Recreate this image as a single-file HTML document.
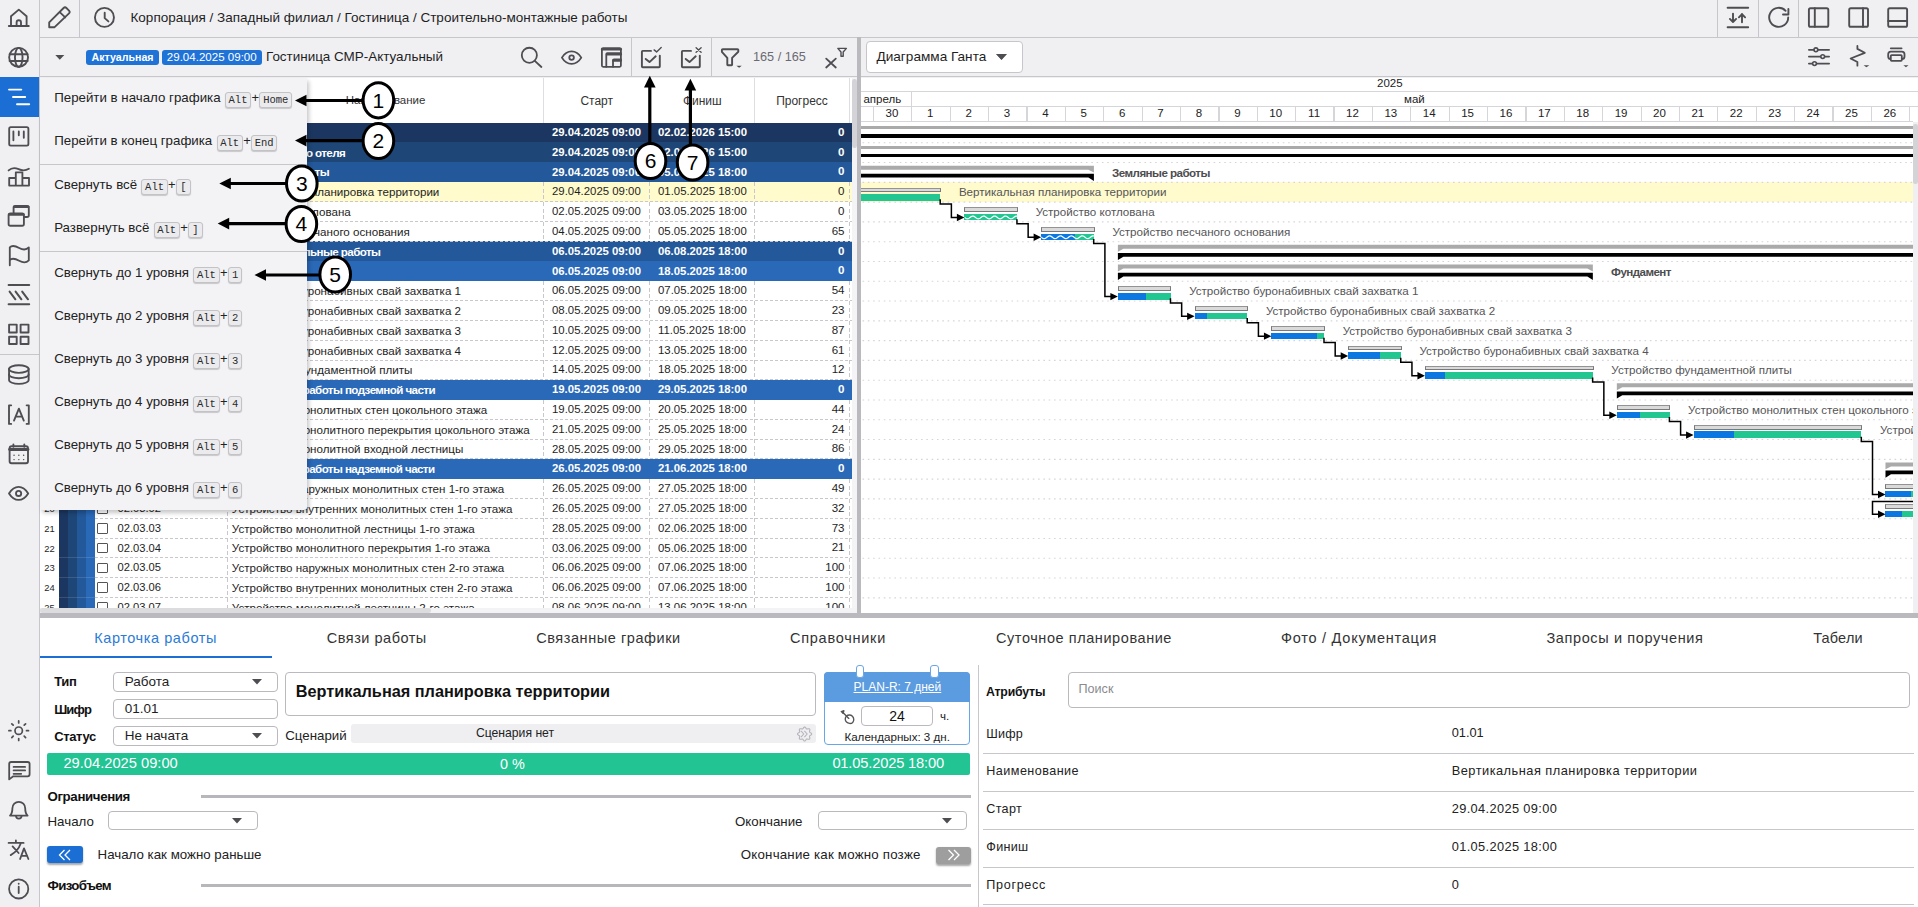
<!DOCTYPE html><html><head><meta charset="utf-8"><style>
html,body{margin:0;padding:0;}
body{width:1918px;height:907px;overflow:hidden;position:relative;background:#f0f0f3;font-family:'Liberation Sans', sans-serif;}
.r{position:absolute;box-sizing:border-box;}
.t{position:absolute;white-space:nowrap;}
.kbd{position:absolute;box-sizing:border-box;background:#ebebee;border:1px solid #c2c2c7;border-radius:3px;box-shadow:0 1px 0 #c8c8cc;font-family:'Liberation Mono', monospace;font-size:10px;color:#333;text-align:center;}
</style></head><body>

<div class="r" style="left:39.00px;top:0.00px;width:1.00px;height:907.00px;background:#c6c6cb;"></div>
<div class="r" style="left:0.00px;top:77.00px;width:39.00px;height:40.00px;background:#1b6fd4;"></div>
<div class="r" style="left:0.00px;top:353.50px;width:39.00px;height:1.00px;background:#c6c6cb;"></div>
<div class="r" style="left:40.00px;top:37.00px;width:1878.00px;height:1.00px;background:#c6c6cb;"></div>
<div class="r" style="left:79.00px;top:0.00px;width:1.00px;height:37.00px;background:#c6c6cb;"></div>
<div class="t" style="left:130.50px;top:10.77px;font-size:13.5px;line-height:13.5px;color:#1e1e1e;">Корпорация / Западный филиал / Гостиница / Строительно-монтажные работы</div>
<div class="r" style="left:1717.00px;top:0.00px;width:1.00px;height:37.00px;background:#c6c6cb;"></div>
<div class="r" style="left:1758.00px;top:0.00px;width:1.00px;height:37.00px;background:#c6c6cb;"></div>
<div class="r" style="left:1798.00px;top:0.00px;width:1.00px;height:37.00px;background:#c6c6cb;"></div>
<div class="r" style="left:40.00px;top:76.00px;width:817.00px;height:1.00px;background:#c6c6cb;"></div>
<div class="r" style="left:861.00px;top:76.00px;width:1057.00px;height:1.00px;background:#c6c6cb;"></div>
<div class="r" style="left:86.00px;top:50.00px;width:73.00px;height:15.00px;background:#1f72d6;border-radius:3px;"></div>
<div class="t" style="left:49.50px;width:73px;text-align:center;top:52.28px;font-size:10.65px;line-height:10.65px;color:#fff;font-weight:700;left:86px;">Актуальная</div>
<div class="r" style="left:162.00px;top:50.00px;width:99.50px;height:15.00px;background:#1f72d6;border-radius:3px;"></div>
<div class="t" style="left:112.25px;width:99.5px;text-align:center;top:51.72px;font-size:11.55px;line-height:11.55px;color:#fff;left:162px;">29.04.2025 09:00</div>
<div class="t" style="left:266.00px;top:50.41px;font-size:13.45px;line-height:13.45px;color:#1e1e1e;">Гостиница СМР-Актуальный</div>
<div class="r" style="left:631.00px;top:38.00px;width:1.00px;height:38.50px;background:#c6c6cb;"></div>
<div class="r" style="left:711.00px;top:38.00px;width:1.00px;height:38.50px;background:#c6c6cb;"></div>
<div class="t" style="left:753.00px;top:51.05px;font-size:12.7px;line-height:12.7px;color:#6a6a70;">165 / 165</div>
<div class="r" style="left:857.00px;top:37.00px;width:4.00px;height:580.00px;background:#b9b9be;"></div>
<div class="r" style="left:40.00px;top:77.50px;width:817.00px;height:45.00px;background:#ffffff;"></div>
<div class="r" style="left:227.00px;top:77.50px;width:1.00px;height:45.00px;background:#dedee2;"></div>
<div class="r" style="left:543.20px;top:77.50px;width:1.00px;height:45.00px;background:#dedee2;"></div>
<div class="r" style="left:649.10px;top:77.50px;width:1.00px;height:45.00px;background:#dedee2;"></div>
<div class="r" style="left:754.20px;top:77.50px;width:1.00px;height:45.00px;background:#dedee2;"></div>
<div class="r" style="left:849.00px;top:77.50px;width:1.00px;height:45.00px;background:#dedee2;"></div>
<div class="t" style="left:305.60px;width:160px;text-align:center;top:95.27px;font-size:11.5px;line-height:11.5px;color:#333;">Наименование</div>
<div class="t" style="left:546.70px;width:100px;text-align:center;top:94.84px;font-size:12px;line-height:12px;color:#333;">Старт</div>
<div class="t" style="left:652.30px;width:100px;text-align:center;top:94.84px;font-size:12px;line-height:12px;color:#333;">Финиш</div>
<div class="t" style="left:752.00px;width:100px;text-align:center;top:94.84px;font-size:12px;line-height:12px;color:#333;">Прогресс</div>
<div class="r" style="left:40px;top:122.7px;width:811.6px;height:485.2px;overflow:hidden;background:#fff;">
<div class="r" style="left:0.00px;top:0.00px;width:811.60px;height:20.09px;background:#1b3761;"></div>
<div class="r" style="left:0.00px;top:19.79px;width:811.60px;height:20.09px;background:#1e4778;"></div>
<div class="r" style="left:0.00px;top:39.57px;width:811.60px;height:20.09px;background:#23589a;"></div>
<div class="r" style="left:0.00px;top:59.36px;width:811.60px;height:20.09px;background:#fffbcc;"></div>
<div class="r" style="left:19.00px;top:59.36px;width:9.00px;height:20.29px;background:#1b3761;"></div>
<div class="r" style="left:28.00px;top:59.36px;width:9.00px;height:20.29px;background:#1e4778;"></div>
<div class="r" style="left:37.00px;top:59.36px;width:9.00px;height:20.29px;background:#23589a;"></div>
<div class="r" style="left:19.00px;top:78.64px;width:27.00px;height:1.00px;background:rgba(255,255,255,0.13);"></div>
<div class="r" style="left:0.00px;top:79.14px;width:811.60px;height:20.09px;background:#fff;"></div>
<div class="r" style="left:19.00px;top:79.14px;width:9.00px;height:20.29px;background:#1b3761;"></div>
<div class="r" style="left:28.00px;top:79.14px;width:9.00px;height:20.29px;background:#1e4778;"></div>
<div class="r" style="left:37.00px;top:79.14px;width:9.00px;height:20.29px;background:#23589a;"></div>
<div class="r" style="left:19.00px;top:98.42px;width:27.00px;height:1.00px;background:rgba(255,255,255,0.13);"></div>
<div class="r" style="left:0.00px;top:98.92px;width:811.60px;height:20.09px;background:#fff;"></div>
<div class="r" style="left:19.00px;top:98.92px;width:9.00px;height:20.29px;background:#1b3761;"></div>
<div class="r" style="left:28.00px;top:98.92px;width:9.00px;height:20.29px;background:#1e4778;"></div>
<div class="r" style="left:37.00px;top:98.92px;width:9.00px;height:20.29px;background:#23589a;"></div>
<div class="r" style="left:19.00px;top:118.21px;width:27.00px;height:1.00px;background:rgba(255,255,255,0.13);"></div>
<div class="r" style="left:0.00px;top:118.71px;width:811.60px;height:20.09px;background:#23589a;"></div>
<div class="r" style="left:0.00px;top:138.50px;width:811.60px;height:20.09px;background:#2a69b8;"></div>
<div class="r" style="left:0.00px;top:158.28px;width:811.60px;height:20.09px;background:#fff;"></div>
<div class="r" style="left:19.00px;top:158.28px;width:9.00px;height:20.29px;background:#1b3761;"></div>
<div class="r" style="left:28.00px;top:158.28px;width:9.00px;height:20.29px;background:#1e4778;"></div>
<div class="r" style="left:37.00px;top:158.28px;width:9.00px;height:20.29px;background:#23589a;"></div>
<div class="r" style="left:46.00px;top:158.28px;width:9.00px;height:20.29px;background:#2a69b8;"></div>
<div class="r" style="left:19.00px;top:177.56px;width:36.00px;height:1.00px;background:rgba(255,255,255,0.13);"></div>
<div class="r" style="left:0.00px;top:178.06px;width:811.60px;height:20.09px;background:#fff;"></div>
<div class="r" style="left:19.00px;top:178.06px;width:9.00px;height:20.29px;background:#1b3761;"></div>
<div class="r" style="left:28.00px;top:178.06px;width:9.00px;height:20.29px;background:#1e4778;"></div>
<div class="r" style="left:37.00px;top:178.06px;width:9.00px;height:20.29px;background:#23589a;"></div>
<div class="r" style="left:46.00px;top:178.06px;width:9.00px;height:20.29px;background:#2a69b8;"></div>
<div class="r" style="left:19.00px;top:197.35px;width:36.00px;height:1.00px;background:rgba(255,255,255,0.13);"></div>
<div class="r" style="left:0.00px;top:197.85px;width:811.60px;height:20.09px;background:#fff;"></div>
<div class="r" style="left:19.00px;top:197.85px;width:9.00px;height:20.29px;background:#1b3761;"></div>
<div class="r" style="left:28.00px;top:197.85px;width:9.00px;height:20.29px;background:#1e4778;"></div>
<div class="r" style="left:37.00px;top:197.85px;width:9.00px;height:20.29px;background:#23589a;"></div>
<div class="r" style="left:46.00px;top:197.85px;width:9.00px;height:20.29px;background:#2a69b8;"></div>
<div class="r" style="left:19.00px;top:217.13px;width:36.00px;height:1.00px;background:rgba(255,255,255,0.13);"></div>
<div class="r" style="left:0.00px;top:217.63px;width:811.60px;height:20.09px;background:#fff;"></div>
<div class="r" style="left:19.00px;top:217.63px;width:9.00px;height:20.29px;background:#1b3761;"></div>
<div class="r" style="left:28.00px;top:217.63px;width:9.00px;height:20.29px;background:#1e4778;"></div>
<div class="r" style="left:37.00px;top:217.63px;width:9.00px;height:20.29px;background:#23589a;"></div>
<div class="r" style="left:46.00px;top:217.63px;width:9.00px;height:20.29px;background:#2a69b8;"></div>
<div class="r" style="left:19.00px;top:236.92px;width:36.00px;height:1.00px;background:rgba(255,255,255,0.13);"></div>
<div class="r" style="left:0.00px;top:237.42px;width:811.60px;height:20.09px;background:#fff;"></div>
<div class="r" style="left:19.00px;top:237.42px;width:9.00px;height:20.29px;background:#1b3761;"></div>
<div class="r" style="left:28.00px;top:237.42px;width:9.00px;height:20.29px;background:#1e4778;"></div>
<div class="r" style="left:37.00px;top:237.42px;width:9.00px;height:20.29px;background:#23589a;"></div>
<div class="r" style="left:46.00px;top:237.42px;width:9.00px;height:20.29px;background:#2a69b8;"></div>
<div class="r" style="left:19.00px;top:256.71px;width:36.00px;height:1.00px;background:rgba(255,255,255,0.13);"></div>
<div class="r" style="left:0.00px;top:257.20px;width:811.60px;height:20.09px;background:#2a69b8;"></div>
<div class="r" style="left:0.00px;top:276.99px;width:811.60px;height:20.09px;background:#fff;"></div>
<div class="r" style="left:19.00px;top:276.99px;width:9.00px;height:20.29px;background:#1b3761;"></div>
<div class="r" style="left:28.00px;top:276.99px;width:9.00px;height:20.29px;background:#1e4778;"></div>
<div class="r" style="left:37.00px;top:276.99px;width:9.00px;height:20.29px;background:#23589a;"></div>
<div class="r" style="left:46.00px;top:276.99px;width:9.00px;height:20.29px;background:#2a69b8;"></div>
<div class="r" style="left:19.00px;top:296.28px;width:36.00px;height:1.00px;background:rgba(255,255,255,0.13);"></div>
<div class="r" style="left:0.00px;top:296.77px;width:811.60px;height:20.09px;background:#fff;"></div>
<div class="r" style="left:19.00px;top:296.77px;width:9.00px;height:20.29px;background:#1b3761;"></div>
<div class="r" style="left:28.00px;top:296.77px;width:9.00px;height:20.29px;background:#1e4778;"></div>
<div class="r" style="left:37.00px;top:296.77px;width:9.00px;height:20.29px;background:#23589a;"></div>
<div class="r" style="left:46.00px;top:296.77px;width:9.00px;height:20.29px;background:#2a69b8;"></div>
<div class="r" style="left:19.00px;top:316.06px;width:36.00px;height:1.00px;background:rgba(255,255,255,0.13);"></div>
<div class="r" style="left:0.00px;top:316.56px;width:811.60px;height:20.09px;background:#fff;"></div>
<div class="r" style="left:19.00px;top:316.56px;width:9.00px;height:20.29px;background:#1b3761;"></div>
<div class="r" style="left:28.00px;top:316.56px;width:9.00px;height:20.29px;background:#1e4778;"></div>
<div class="r" style="left:37.00px;top:316.56px;width:9.00px;height:20.29px;background:#23589a;"></div>
<div class="r" style="left:46.00px;top:316.56px;width:9.00px;height:20.29px;background:#2a69b8;"></div>
<div class="r" style="left:19.00px;top:335.85px;width:36.00px;height:1.00px;background:rgba(255,255,255,0.13);"></div>
<div class="r" style="left:0.00px;top:336.35px;width:811.60px;height:20.09px;background:#2a69b8;"></div>
<div class="r" style="left:0.00px;top:356.13px;width:811.60px;height:20.09px;background:#fff;"></div>
<div class="r" style="left:19.00px;top:356.13px;width:9.00px;height:20.29px;background:#1b3761;"></div>
<div class="r" style="left:28.00px;top:356.13px;width:9.00px;height:20.29px;background:#1e4778;"></div>
<div class="r" style="left:37.00px;top:356.13px;width:9.00px;height:20.29px;background:#23589a;"></div>
<div class="r" style="left:46.00px;top:356.13px;width:9.00px;height:20.29px;background:#2a69b8;"></div>
<div class="r" style="left:19.00px;top:375.42px;width:36.00px;height:1.00px;background:rgba(255,255,255,0.13);"></div>
<div class="r" style="left:0.00px;top:375.92px;width:811.60px;height:20.09px;background:#fff;"></div>
<div class="r" style="left:19.00px;top:375.92px;width:9.00px;height:20.29px;background:#1b3761;"></div>
<div class="r" style="left:28.00px;top:375.92px;width:9.00px;height:20.29px;background:#1e4778;"></div>
<div class="r" style="left:37.00px;top:375.92px;width:9.00px;height:20.29px;background:#23589a;"></div>
<div class="r" style="left:46.00px;top:375.92px;width:9.00px;height:20.29px;background:#2a69b8;"></div>
<div class="r" style="left:19.00px;top:395.20px;width:36.00px;height:1.00px;background:rgba(255,255,255,0.13);"></div>
<div class="r" style="left:0.00px;top:395.70px;width:811.60px;height:20.09px;background:#fff;"></div>
<div class="r" style="left:19.00px;top:395.70px;width:9.00px;height:20.29px;background:#1b3761;"></div>
<div class="r" style="left:28.00px;top:395.70px;width:9.00px;height:20.29px;background:#1e4778;"></div>
<div class="r" style="left:37.00px;top:395.70px;width:9.00px;height:20.29px;background:#23589a;"></div>
<div class="r" style="left:46.00px;top:395.70px;width:9.00px;height:20.29px;background:#2a69b8;"></div>
<div class="r" style="left:19.00px;top:414.99px;width:36.00px;height:1.00px;background:rgba(255,255,255,0.13);"></div>
<div class="r" style="left:0.00px;top:415.49px;width:811.60px;height:20.09px;background:#fff;"></div>
<div class="r" style="left:19.00px;top:415.49px;width:9.00px;height:20.29px;background:#1b3761;"></div>
<div class="r" style="left:28.00px;top:415.49px;width:9.00px;height:20.29px;background:#1e4778;"></div>
<div class="r" style="left:37.00px;top:415.49px;width:9.00px;height:20.29px;background:#23589a;"></div>
<div class="r" style="left:46.00px;top:415.49px;width:9.00px;height:20.29px;background:#2a69b8;"></div>
<div class="r" style="left:19.00px;top:434.77px;width:36.00px;height:1.00px;background:rgba(255,255,255,0.13);"></div>
<div class="r" style="left:0.00px;top:435.27px;width:811.60px;height:20.09px;background:#fff;"></div>
<div class="r" style="left:19.00px;top:435.27px;width:9.00px;height:20.29px;background:#1b3761;"></div>
<div class="r" style="left:28.00px;top:435.27px;width:9.00px;height:20.29px;background:#1e4778;"></div>
<div class="r" style="left:37.00px;top:435.27px;width:9.00px;height:20.29px;background:#23589a;"></div>
<div class="r" style="left:46.00px;top:435.27px;width:9.00px;height:20.29px;background:#2a69b8;"></div>
<div class="r" style="left:19.00px;top:454.56px;width:36.00px;height:1.00px;background:rgba(255,255,255,0.13);"></div>
<div class="r" style="left:0.00px;top:455.06px;width:811.60px;height:20.09px;background:#fff;"></div>
<div class="r" style="left:19.00px;top:455.06px;width:9.00px;height:20.29px;background:#1b3761;"></div>
<div class="r" style="left:28.00px;top:455.06px;width:9.00px;height:20.29px;background:#1e4778;"></div>
<div class="r" style="left:37.00px;top:455.06px;width:9.00px;height:20.29px;background:#23589a;"></div>
<div class="r" style="left:46.00px;top:455.06px;width:9.00px;height:20.29px;background:#2a69b8;"></div>
<div class="r" style="left:19.00px;top:474.34px;width:36.00px;height:1.00px;background:rgba(255,255,255,0.13);"></div>
<div class="r" style="left:0.00px;top:474.84px;width:811.60px;height:20.09px;background:#fff;"></div>
<div class="r" style="left:19.00px;top:474.84px;width:9.00px;height:20.29px;background:#1b3761;"></div>
<div class="r" style="left:28.00px;top:474.84px;width:9.00px;height:20.29px;background:#1e4778;"></div>
<div class="r" style="left:37.00px;top:474.84px;width:9.00px;height:20.29px;background:#23589a;"></div>
<div class="r" style="left:46.00px;top:474.84px;width:9.00px;height:20.29px;background:#2a69b8;"></div>
<div class="r" style="left:19.00px;top:494.13px;width:36.00px;height:1.00px;background:rgba(255,255,255,0.13);"></div>
<div class="t" style="left:4.20px;top:5.44px;font-size:9.4px;line-height:9.4px;color:#fff;">1</div>
<div class="t" style="left:77.50px;top:4.52px;font-size:11.2px;line-height:11.2px;color:#fff;font-weight:700;">01</div>
<div class="t" style="left:191.80px;top:4.18px;font-size:11.6px;line-height:11.6px;color:#fff;font-weight:700;letter-spacing:-0.58px;">Гостиница</div>
<div class="t" style="left:512.00px;top:4.39px;font-size:11.35px;line-height:11.35px;color:#fff;font-weight:700;">29.04.2025 09:00</div>
<div class="t" style="left:618.00px;top:4.39px;font-size:11.35px;line-height:11.35px;color:#fff;font-weight:700;">02.02.2026 15:00</div>
<div class="t" style="left:744.50px;width:60px;text-align:right;top:4.22px;font-size:11.55px;line-height:11.55px;color:#fff;font-weight:700;">0</div>
<div class="t" style="left:4.20px;top:25.23px;font-size:9.4px;line-height:9.4px;color:#fff;">2</div>
<div class="t" style="left:77.50px;top:24.30px;font-size:11.2px;line-height:11.2px;color:#fff;font-weight:700;">01</div>
<div class="t" style="left:191.80px;top:23.97px;font-size:11.6px;line-height:11.6px;color:#fff;font-weight:700;letter-spacing:-0.58px;">Строительство отеля</div>
<div class="t" style="left:512.00px;top:24.18px;font-size:11.35px;line-height:11.35px;color:#fff;font-weight:700;">29.04.2025 09:00</div>
<div class="t" style="left:618.00px;top:24.18px;font-size:11.35px;line-height:11.35px;color:#fff;font-weight:700;">02.02.2026 15:00</div>
<div class="t" style="left:744.50px;width:60px;text-align:right;top:24.01px;font-size:11.55px;line-height:11.55px;color:#fff;font-weight:700;">0</div>
<div class="t" style="left:4.20px;top:45.01px;font-size:9.4px;line-height:9.4px;color:#fff;">3</div>
<div class="t" style="left:77.50px;top:44.09px;font-size:11.2px;line-height:11.2px;color:#fff;font-weight:700;">01</div>
<div class="t" style="left:191.80px;top:43.75px;font-size:11.6px;line-height:11.6px;color:#fff;font-weight:700;letter-spacing:-0.58px;">Земляные работы</div>
<div class="t" style="left:512.00px;top:43.96px;font-size:11.35px;line-height:11.35px;color:#fff;font-weight:700;">29.04.2025 09:00</div>
<div class="t" style="left:618.00px;top:43.96px;font-size:11.35px;line-height:11.35px;color:#fff;font-weight:700;">05.05.2025 18:00</div>
<div class="t" style="left:744.50px;width:60px;text-align:right;top:43.79px;font-size:11.55px;line-height:11.55px;color:#fff;font-weight:700;">0</div>
<div class="r" style="left:55.00px;top:78.54px;width:760.00px;height:1.00px;background:repeating-linear-gradient(90deg,#c8c8cc 0,#c8c8cc 3px,transparent 3px,transparent 5px);"></div>
<div class="r" style="left:187.00px;top:59.36px;width:1.00px;height:19.79px;background:repeating-linear-gradient(180deg,#c8c8cc 0,#c8c8cc 4px,transparent 4px,transparent 6.6px);"></div>
<div class="r" style="left:503.20px;top:59.36px;width:1.00px;height:19.79px;background:repeating-linear-gradient(180deg,#c8c8cc 0,#c8c8cc 4px,transparent 4px,transparent 6.6px);"></div>
<div class="r" style="left:609.10px;top:59.36px;width:1.00px;height:19.79px;background:repeating-linear-gradient(180deg,#c8c8cc 0,#c8c8cc 4px,transparent 4px,transparent 6.6px);"></div>
<div class="r" style="left:714.20px;top:59.36px;width:1.00px;height:19.79px;background:repeating-linear-gradient(180deg,#c8c8cc 0,#c8c8cc 4px,transparent 4px,transparent 6.6px);"></div>
<div class="r" style="left:808.70px;top:59.36px;width:1.00px;height:19.79px;background:repeating-linear-gradient(180deg,#c8c8cc 0,#c8c8cc 4px,transparent 4px,transparent 6.6px);"></div>
<div class="r" style="left:57.00px;top:63.96px;width:11.20px;height:10.60px;background:#fff;border:1px solid #555;border-radius:1px;"></div>
<div class="t" style="left:4.20px;top:64.80px;font-size:9.4px;line-height:9.4px;color:#1e1e1e;">4</div>
<div class="t" style="left:77.50px;top:63.87px;font-size:11.2px;line-height:11.2px;color:#1e1e1e;">01.01</div>
<div class="t" style="left:191.80px;top:63.54px;font-size:11.6px;line-height:11.6px;color:#1e1e1e;">Вертикальная планировка территории</div>
<div class="t" style="left:512.00px;top:63.69px;font-size:11.42px;line-height:11.42px;color:#1e1e1e;">29.04.2025 09:00</div>
<div class="t" style="left:618.00px;top:63.69px;font-size:11.42px;line-height:11.42px;color:#1e1e1e;">01.05.2025 18:00</div>
<div class="t" style="left:744.50px;width:60px;text-align:right;top:63.58px;font-size:11.55px;line-height:11.55px;color:#1e1e1e;">0</div>
<div class="r" style="left:55.00px;top:98.33px;width:760.00px;height:1.00px;background:repeating-linear-gradient(90deg,#c8c8cc 0,#c8c8cc 3px,transparent 3px,transparent 5px);"></div>
<div class="r" style="left:187.00px;top:79.14px;width:1.00px;height:19.79px;background:repeating-linear-gradient(180deg,#c8c8cc 0,#c8c8cc 4px,transparent 4px,transparent 6.6px);"></div>
<div class="r" style="left:503.20px;top:79.14px;width:1.00px;height:19.79px;background:repeating-linear-gradient(180deg,#c8c8cc 0,#c8c8cc 4px,transparent 4px,transparent 6.6px);"></div>
<div class="r" style="left:609.10px;top:79.14px;width:1.00px;height:19.79px;background:repeating-linear-gradient(180deg,#c8c8cc 0,#c8c8cc 4px,transparent 4px,transparent 6.6px);"></div>
<div class="r" style="left:714.20px;top:79.14px;width:1.00px;height:19.79px;background:repeating-linear-gradient(180deg,#c8c8cc 0,#c8c8cc 4px,transparent 4px,transparent 6.6px);"></div>
<div class="r" style="left:808.70px;top:79.14px;width:1.00px;height:19.79px;background:repeating-linear-gradient(180deg,#c8c8cc 0,#c8c8cc 4px,transparent 4px,transparent 6.6px);"></div>
<div class="r" style="left:57.00px;top:83.74px;width:11.20px;height:10.60px;background:#fff;border:1px solid #555;border-radius:1px;"></div>
<div class="t" style="left:4.20px;top:84.58px;font-size:9.4px;line-height:9.4px;color:#1e1e1e;">5</div>
<div class="t" style="left:77.50px;top:83.66px;font-size:11.2px;line-height:11.2px;color:#1e1e1e;">01.02</div>
<div class="t" style="left:191.80px;top:83.32px;font-size:11.6px;line-height:11.6px;color:#1e1e1e;">Устройство котлована</div>
<div class="t" style="left:512.00px;top:83.47px;font-size:11.42px;line-height:11.42px;color:#1e1e1e;">02.05.2025 09:00</div>
<div class="t" style="left:618.00px;top:83.47px;font-size:11.42px;line-height:11.42px;color:#1e1e1e;">03.05.2025 18:00</div>
<div class="t" style="left:744.50px;width:60px;text-align:right;top:83.36px;font-size:11.55px;line-height:11.55px;color:#1e1e1e;">0</div>
<div class="r" style="left:55.00px;top:118.11px;width:760.00px;height:1.00px;background:repeating-linear-gradient(90deg,#c8c8cc 0,#c8c8cc 3px,transparent 3px,transparent 5px);"></div>
<div class="r" style="left:187.00px;top:98.92px;width:1.00px;height:19.79px;background:repeating-linear-gradient(180deg,#c8c8cc 0,#c8c8cc 4px,transparent 4px,transparent 6.6px);"></div>
<div class="r" style="left:503.20px;top:98.92px;width:1.00px;height:19.79px;background:repeating-linear-gradient(180deg,#c8c8cc 0,#c8c8cc 4px,transparent 4px,transparent 6.6px);"></div>
<div class="r" style="left:609.10px;top:98.92px;width:1.00px;height:19.79px;background:repeating-linear-gradient(180deg,#c8c8cc 0,#c8c8cc 4px,transparent 4px,transparent 6.6px);"></div>
<div class="r" style="left:714.20px;top:98.92px;width:1.00px;height:19.79px;background:repeating-linear-gradient(180deg,#c8c8cc 0,#c8c8cc 4px,transparent 4px,transparent 6.6px);"></div>
<div class="r" style="left:808.70px;top:98.92px;width:1.00px;height:19.79px;background:repeating-linear-gradient(180deg,#c8c8cc 0,#c8c8cc 4px,transparent 4px,transparent 6.6px);"></div>
<div class="r" style="left:57.00px;top:103.52px;width:11.20px;height:10.60px;background:#fff;border:1px solid #555;border-radius:1px;"></div>
<div class="t" style="left:4.20px;top:104.37px;font-size:9.4px;line-height:9.4px;color:#1e1e1e;">6</div>
<div class="t" style="left:77.50px;top:103.44px;font-size:11.2px;line-height:11.2px;color:#1e1e1e;">01.03</div>
<div class="t" style="left:191.80px;top:103.11px;font-size:11.6px;line-height:11.6px;color:#1e1e1e;">Устройство песчаного основания</div>
<div class="t" style="left:512.00px;top:103.26px;font-size:11.42px;line-height:11.42px;color:#1e1e1e;">04.05.2025 09:00</div>
<div class="t" style="left:618.00px;top:103.26px;font-size:11.42px;line-height:11.42px;color:#1e1e1e;">05.05.2025 18:00</div>
<div class="t" style="left:744.50px;width:60px;text-align:right;top:103.15px;font-size:11.55px;line-height:11.55px;color:#1e1e1e;">65</div>
<div class="t" style="left:4.20px;top:124.15px;font-size:9.4px;line-height:9.4px;color:#fff;">7</div>
<div class="t" style="left:77.50px;top:123.23px;font-size:11.2px;line-height:11.2px;color:#fff;font-weight:700;">02</div>
<div class="t" style="left:191.80px;top:122.89px;font-size:11.6px;line-height:11.6px;color:#fff;font-weight:700;letter-spacing:-0.58px;">Общестроительные работы</div>
<div class="t" style="left:512.00px;top:123.10px;font-size:11.35px;line-height:11.35px;color:#fff;font-weight:700;">06.05.2025 09:00</div>
<div class="t" style="left:618.00px;top:123.10px;font-size:11.35px;line-height:11.35px;color:#fff;font-weight:700;">06.08.2025 18:00</div>
<div class="t" style="left:744.50px;width:60px;text-align:right;top:122.93px;font-size:11.55px;line-height:11.55px;color:#fff;font-weight:700;">0</div>
<div class="t" style="left:4.20px;top:143.94px;font-size:9.4px;line-height:9.4px;color:#fff;">8</div>
<div class="t" style="left:77.50px;top:143.01px;font-size:11.2px;line-height:11.2px;color:#fff;font-weight:700;">02.01</div>
<div class="t" style="left:191.80px;top:142.68px;font-size:11.6px;line-height:11.6px;color:#fff;font-weight:700;letter-spacing:-0.58px;">Фундамент</div>
<div class="t" style="left:512.00px;top:142.89px;font-size:11.35px;line-height:11.35px;color:#fff;font-weight:700;">06.05.2025 09:00</div>
<div class="t" style="left:618.00px;top:142.89px;font-size:11.35px;line-height:11.35px;color:#fff;font-weight:700;">18.05.2025 18:00</div>
<div class="t" style="left:744.50px;width:60px;text-align:right;top:142.72px;font-size:11.55px;line-height:11.55px;color:#fff;font-weight:700;">0</div>
<div class="r" style="left:55.00px;top:177.47px;width:760.00px;height:1.00px;background:repeating-linear-gradient(90deg,#c8c8cc 0,#c8c8cc 3px,transparent 3px,transparent 5px);"></div>
<div class="r" style="left:187.00px;top:158.28px;width:1.00px;height:19.79px;background:repeating-linear-gradient(180deg,#c8c8cc 0,#c8c8cc 4px,transparent 4px,transparent 6.6px);"></div>
<div class="r" style="left:503.20px;top:158.28px;width:1.00px;height:19.79px;background:repeating-linear-gradient(180deg,#c8c8cc 0,#c8c8cc 4px,transparent 4px,transparent 6.6px);"></div>
<div class="r" style="left:609.10px;top:158.28px;width:1.00px;height:19.79px;background:repeating-linear-gradient(180deg,#c8c8cc 0,#c8c8cc 4px,transparent 4px,transparent 6.6px);"></div>
<div class="r" style="left:714.20px;top:158.28px;width:1.00px;height:19.79px;background:repeating-linear-gradient(180deg,#c8c8cc 0,#c8c8cc 4px,transparent 4px,transparent 6.6px);"></div>
<div class="r" style="left:808.70px;top:158.28px;width:1.00px;height:19.79px;background:repeating-linear-gradient(180deg,#c8c8cc 0,#c8c8cc 4px,transparent 4px,transparent 6.6px);"></div>
<div class="r" style="left:57.00px;top:162.88px;width:11.20px;height:10.60px;background:#fff;border:1px solid #555;border-radius:1px;"></div>
<div class="t" style="left:4.20px;top:163.72px;font-size:9.4px;line-height:9.4px;color:#1e1e1e;">9</div>
<div class="t" style="left:77.50px;top:162.80px;font-size:11.2px;line-height:11.2px;color:#1e1e1e;">02.01.01</div>
<div class="t" style="left:191.80px;top:162.46px;font-size:11.6px;line-height:11.6px;color:#1e1e1e;">Устройство буронабивных свай захватка 1</div>
<div class="t" style="left:512.00px;top:162.61px;font-size:11.42px;line-height:11.42px;color:#1e1e1e;">06.05.2025 09:00</div>
<div class="t" style="left:618.00px;top:162.61px;font-size:11.42px;line-height:11.42px;color:#1e1e1e;">07.05.2025 18:00</div>
<div class="t" style="left:744.50px;width:60px;text-align:right;top:162.50px;font-size:11.55px;line-height:11.55px;color:#1e1e1e;">54</div>
<div class="r" style="left:55.00px;top:197.25px;width:760.00px;height:1.00px;background:repeating-linear-gradient(90deg,#c8c8cc 0,#c8c8cc 3px,transparent 3px,transparent 5px);"></div>
<div class="r" style="left:187.00px;top:178.06px;width:1.00px;height:19.79px;background:repeating-linear-gradient(180deg,#c8c8cc 0,#c8c8cc 4px,transparent 4px,transparent 6.6px);"></div>
<div class="r" style="left:503.20px;top:178.06px;width:1.00px;height:19.79px;background:repeating-linear-gradient(180deg,#c8c8cc 0,#c8c8cc 4px,transparent 4px,transparent 6.6px);"></div>
<div class="r" style="left:609.10px;top:178.06px;width:1.00px;height:19.79px;background:repeating-linear-gradient(180deg,#c8c8cc 0,#c8c8cc 4px,transparent 4px,transparent 6.6px);"></div>
<div class="r" style="left:714.20px;top:178.06px;width:1.00px;height:19.79px;background:repeating-linear-gradient(180deg,#c8c8cc 0,#c8c8cc 4px,transparent 4px,transparent 6.6px);"></div>
<div class="r" style="left:808.70px;top:178.06px;width:1.00px;height:19.79px;background:repeating-linear-gradient(180deg,#c8c8cc 0,#c8c8cc 4px,transparent 4px,transparent 6.6px);"></div>
<div class="r" style="left:57.00px;top:182.66px;width:11.20px;height:10.60px;background:#fff;border:1px solid #555;border-radius:1px;"></div>
<div class="t" style="left:4.20px;top:183.51px;font-size:9.4px;line-height:9.4px;color:#1e1e1e;">10</div>
<div class="t" style="left:77.50px;top:182.58px;font-size:11.2px;line-height:11.2px;color:#1e1e1e;">02.01.02</div>
<div class="t" style="left:191.80px;top:182.25px;font-size:11.6px;line-height:11.6px;color:#1e1e1e;">Устройство буронабивных свай захватка 2</div>
<div class="t" style="left:512.00px;top:182.40px;font-size:11.42px;line-height:11.42px;color:#1e1e1e;">08.05.2025 09:00</div>
<div class="t" style="left:618.00px;top:182.40px;font-size:11.42px;line-height:11.42px;color:#1e1e1e;">09.05.2025 18:00</div>
<div class="t" style="left:744.50px;width:60px;text-align:right;top:182.29px;font-size:11.55px;line-height:11.55px;color:#1e1e1e;">23</div>
<div class="r" style="left:55.00px;top:217.03px;width:760.00px;height:1.00px;background:repeating-linear-gradient(90deg,#c8c8cc 0,#c8c8cc 3px,transparent 3px,transparent 5px);"></div>
<div class="r" style="left:187.00px;top:197.85px;width:1.00px;height:19.79px;background:repeating-linear-gradient(180deg,#c8c8cc 0,#c8c8cc 4px,transparent 4px,transparent 6.6px);"></div>
<div class="r" style="left:503.20px;top:197.85px;width:1.00px;height:19.79px;background:repeating-linear-gradient(180deg,#c8c8cc 0,#c8c8cc 4px,transparent 4px,transparent 6.6px);"></div>
<div class="r" style="left:609.10px;top:197.85px;width:1.00px;height:19.79px;background:repeating-linear-gradient(180deg,#c8c8cc 0,#c8c8cc 4px,transparent 4px,transparent 6.6px);"></div>
<div class="r" style="left:714.20px;top:197.85px;width:1.00px;height:19.79px;background:repeating-linear-gradient(180deg,#c8c8cc 0,#c8c8cc 4px,transparent 4px,transparent 6.6px);"></div>
<div class="r" style="left:808.70px;top:197.85px;width:1.00px;height:19.79px;background:repeating-linear-gradient(180deg,#c8c8cc 0,#c8c8cc 4px,transparent 4px,transparent 6.6px);"></div>
<div class="r" style="left:57.00px;top:202.45px;width:11.20px;height:10.60px;background:#fff;border:1px solid #555;border-radius:1px;"></div>
<div class="t" style="left:4.20px;top:203.29px;font-size:9.4px;line-height:9.4px;color:#1e1e1e;">11</div>
<div class="t" style="left:77.50px;top:202.37px;font-size:11.2px;line-height:11.2px;color:#1e1e1e;">02.01.03</div>
<div class="t" style="left:191.80px;top:202.03px;font-size:11.6px;line-height:11.6px;color:#1e1e1e;">Устройство буронабивных свай захватка 3</div>
<div class="t" style="left:512.00px;top:202.18px;font-size:11.42px;line-height:11.42px;color:#1e1e1e;">10.05.2025 09:00</div>
<div class="t" style="left:618.00px;top:202.18px;font-size:11.42px;line-height:11.42px;color:#1e1e1e;">11.05.2025 18:00</div>
<div class="t" style="left:744.50px;width:60px;text-align:right;top:202.07px;font-size:11.55px;line-height:11.55px;color:#1e1e1e;">87</div>
<div class="r" style="left:55.00px;top:236.82px;width:760.00px;height:1.00px;background:repeating-linear-gradient(90deg,#c8c8cc 0,#c8c8cc 3px,transparent 3px,transparent 5px);"></div>
<div class="r" style="left:187.00px;top:217.63px;width:1.00px;height:19.79px;background:repeating-linear-gradient(180deg,#c8c8cc 0,#c8c8cc 4px,transparent 4px,transparent 6.6px);"></div>
<div class="r" style="left:503.20px;top:217.63px;width:1.00px;height:19.79px;background:repeating-linear-gradient(180deg,#c8c8cc 0,#c8c8cc 4px,transparent 4px,transparent 6.6px);"></div>
<div class="r" style="left:609.10px;top:217.63px;width:1.00px;height:19.79px;background:repeating-linear-gradient(180deg,#c8c8cc 0,#c8c8cc 4px,transparent 4px,transparent 6.6px);"></div>
<div class="r" style="left:714.20px;top:217.63px;width:1.00px;height:19.79px;background:repeating-linear-gradient(180deg,#c8c8cc 0,#c8c8cc 4px,transparent 4px,transparent 6.6px);"></div>
<div class="r" style="left:808.70px;top:217.63px;width:1.00px;height:19.79px;background:repeating-linear-gradient(180deg,#c8c8cc 0,#c8c8cc 4px,transparent 4px,transparent 6.6px);"></div>
<div class="r" style="left:57.00px;top:222.23px;width:11.20px;height:10.60px;background:#fff;border:1px solid #555;border-radius:1px;"></div>
<div class="t" style="left:4.20px;top:223.08px;font-size:9.4px;line-height:9.4px;color:#1e1e1e;">12</div>
<div class="t" style="left:77.50px;top:222.15px;font-size:11.2px;line-height:11.2px;color:#1e1e1e;">02.01.04</div>
<div class="t" style="left:191.80px;top:221.82px;font-size:11.6px;line-height:11.6px;color:#1e1e1e;">Устройство буронабивных свай захватка 4</div>
<div class="t" style="left:512.00px;top:221.97px;font-size:11.42px;line-height:11.42px;color:#1e1e1e;">12.05.2025 09:00</div>
<div class="t" style="left:618.00px;top:221.97px;font-size:11.42px;line-height:11.42px;color:#1e1e1e;">13.05.2025 18:00</div>
<div class="t" style="left:744.50px;width:60px;text-align:right;top:221.86px;font-size:11.55px;line-height:11.55px;color:#1e1e1e;">61</div>
<div class="r" style="left:55.00px;top:256.61px;width:760.00px;height:1.00px;background:repeating-linear-gradient(90deg,#c8c8cc 0,#c8c8cc 3px,transparent 3px,transparent 5px);"></div>
<div class="r" style="left:187.00px;top:237.42px;width:1.00px;height:19.79px;background:repeating-linear-gradient(180deg,#c8c8cc 0,#c8c8cc 4px,transparent 4px,transparent 6.6px);"></div>
<div class="r" style="left:503.20px;top:237.42px;width:1.00px;height:19.79px;background:repeating-linear-gradient(180deg,#c8c8cc 0,#c8c8cc 4px,transparent 4px,transparent 6.6px);"></div>
<div class="r" style="left:609.10px;top:237.42px;width:1.00px;height:19.79px;background:repeating-linear-gradient(180deg,#c8c8cc 0,#c8c8cc 4px,transparent 4px,transparent 6.6px);"></div>
<div class="r" style="left:714.20px;top:237.42px;width:1.00px;height:19.79px;background:repeating-linear-gradient(180deg,#c8c8cc 0,#c8c8cc 4px,transparent 4px,transparent 6.6px);"></div>
<div class="r" style="left:808.70px;top:237.42px;width:1.00px;height:19.79px;background:repeating-linear-gradient(180deg,#c8c8cc 0,#c8c8cc 4px,transparent 4px,transparent 6.6px);"></div>
<div class="r" style="left:57.00px;top:242.02px;width:11.20px;height:10.60px;background:#fff;border:1px solid #555;border-radius:1px;"></div>
<div class="t" style="left:4.20px;top:242.86px;font-size:9.4px;line-height:9.4px;color:#1e1e1e;">13</div>
<div class="t" style="left:77.50px;top:241.94px;font-size:11.2px;line-height:11.2px;color:#1e1e1e;">02.01.05</div>
<div class="t" style="left:191.80px;top:241.60px;font-size:11.6px;line-height:11.6px;color:#1e1e1e;">Устройство фундаментной плиты</div>
<div class="t" style="left:512.00px;top:241.75px;font-size:11.42px;line-height:11.42px;color:#1e1e1e;">14.05.2025 09:00</div>
<div class="t" style="left:618.00px;top:241.75px;font-size:11.42px;line-height:11.42px;color:#1e1e1e;">18.05.2025 18:00</div>
<div class="t" style="left:744.50px;width:60px;text-align:right;top:241.64px;font-size:11.55px;line-height:11.55px;color:#1e1e1e;">12</div>
<div class="t" style="left:4.20px;top:262.65px;font-size:9.4px;line-height:9.4px;color:#fff;">14</div>
<div class="t" style="left:77.50px;top:261.72px;font-size:11.2px;line-height:11.2px;color:#fff;font-weight:700;">02.02</div>
<div class="t" style="left:191.80px;top:261.39px;font-size:11.6px;line-height:11.6px;color:#fff;font-weight:700;letter-spacing:-0.58px;">Монолитные работы подземной части</div>
<div class="t" style="left:512.00px;top:261.60px;font-size:11.35px;line-height:11.35px;color:#fff;font-weight:700;">19.05.2025 09:00</div>
<div class="t" style="left:618.00px;top:261.60px;font-size:11.35px;line-height:11.35px;color:#fff;font-weight:700;">29.05.2025 18:00</div>
<div class="t" style="left:744.50px;width:60px;text-align:right;top:261.43px;font-size:11.55px;line-height:11.55px;color:#fff;font-weight:700;">0</div>
<div class="r" style="left:55.00px;top:296.18px;width:760.00px;height:1.00px;background:repeating-linear-gradient(90deg,#c8c8cc 0,#c8c8cc 3px,transparent 3px,transparent 5px);"></div>
<div class="r" style="left:187.00px;top:276.99px;width:1.00px;height:19.79px;background:repeating-linear-gradient(180deg,#c8c8cc 0,#c8c8cc 4px,transparent 4px,transparent 6.6px);"></div>
<div class="r" style="left:503.20px;top:276.99px;width:1.00px;height:19.79px;background:repeating-linear-gradient(180deg,#c8c8cc 0,#c8c8cc 4px,transparent 4px,transparent 6.6px);"></div>
<div class="r" style="left:609.10px;top:276.99px;width:1.00px;height:19.79px;background:repeating-linear-gradient(180deg,#c8c8cc 0,#c8c8cc 4px,transparent 4px,transparent 6.6px);"></div>
<div class="r" style="left:714.20px;top:276.99px;width:1.00px;height:19.79px;background:repeating-linear-gradient(180deg,#c8c8cc 0,#c8c8cc 4px,transparent 4px,transparent 6.6px);"></div>
<div class="r" style="left:808.70px;top:276.99px;width:1.00px;height:19.79px;background:repeating-linear-gradient(180deg,#c8c8cc 0,#c8c8cc 4px,transparent 4px,transparent 6.6px);"></div>
<div class="r" style="left:57.00px;top:281.59px;width:11.20px;height:10.60px;background:#fff;border:1px solid #555;border-radius:1px;"></div>
<div class="t" style="left:4.20px;top:282.43px;font-size:9.4px;line-height:9.4px;color:#1e1e1e;">15</div>
<div class="t" style="left:77.50px;top:281.51px;font-size:11.2px;line-height:11.2px;color:#1e1e1e;">02.02.01</div>
<div class="t" style="left:191.80px;top:281.17px;font-size:11.6px;line-height:11.6px;color:#1e1e1e;">Устройство монолитных стен цокольного этажа</div>
<div class="t" style="left:512.00px;top:281.32px;font-size:11.42px;line-height:11.42px;color:#1e1e1e;">19.05.2025 09:00</div>
<div class="t" style="left:618.00px;top:281.32px;font-size:11.42px;line-height:11.42px;color:#1e1e1e;">20.05.2025 18:00</div>
<div class="t" style="left:744.50px;width:60px;text-align:right;top:281.21px;font-size:11.55px;line-height:11.55px;color:#1e1e1e;">44</div>
<div class="r" style="left:55.00px;top:315.96px;width:760.00px;height:1.00px;background:repeating-linear-gradient(90deg,#c8c8cc 0,#c8c8cc 3px,transparent 3px,transparent 5px);"></div>
<div class="r" style="left:187.00px;top:296.77px;width:1.00px;height:19.79px;background:repeating-linear-gradient(180deg,#c8c8cc 0,#c8c8cc 4px,transparent 4px,transparent 6.6px);"></div>
<div class="r" style="left:503.20px;top:296.77px;width:1.00px;height:19.79px;background:repeating-linear-gradient(180deg,#c8c8cc 0,#c8c8cc 4px,transparent 4px,transparent 6.6px);"></div>
<div class="r" style="left:609.10px;top:296.77px;width:1.00px;height:19.79px;background:repeating-linear-gradient(180deg,#c8c8cc 0,#c8c8cc 4px,transparent 4px,transparent 6.6px);"></div>
<div class="r" style="left:714.20px;top:296.77px;width:1.00px;height:19.79px;background:repeating-linear-gradient(180deg,#c8c8cc 0,#c8c8cc 4px,transparent 4px,transparent 6.6px);"></div>
<div class="r" style="left:808.70px;top:296.77px;width:1.00px;height:19.79px;background:repeating-linear-gradient(180deg,#c8c8cc 0,#c8c8cc 4px,transparent 4px,transparent 6.6px);"></div>
<div class="r" style="left:57.00px;top:301.38px;width:11.20px;height:10.60px;background:#fff;border:1px solid #555;border-radius:1px;"></div>
<div class="t" style="left:4.20px;top:302.22px;font-size:9.4px;line-height:9.4px;color:#1e1e1e;">16</div>
<div class="t" style="left:77.50px;top:301.29px;font-size:11.2px;line-height:11.2px;color:#1e1e1e;">02.02.02</div>
<div class="t" style="left:191.80px;top:300.96px;font-size:11.6px;line-height:11.6px;color:#1e1e1e;">Устройство монолитного перекрытия цокольного этажа</div>
<div class="t" style="left:512.00px;top:301.11px;font-size:11.42px;line-height:11.42px;color:#1e1e1e;">21.05.2025 09:00</div>
<div class="t" style="left:618.00px;top:301.11px;font-size:11.42px;line-height:11.42px;color:#1e1e1e;">25.05.2025 18:00</div>
<div class="t" style="left:744.50px;width:60px;text-align:right;top:301.00px;font-size:11.55px;line-height:11.55px;color:#1e1e1e;">24</div>
<div class="r" style="left:55.00px;top:335.75px;width:760.00px;height:1.00px;background:repeating-linear-gradient(90deg,#c8c8cc 0,#c8c8cc 3px,transparent 3px,transparent 5px);"></div>
<div class="r" style="left:187.00px;top:316.56px;width:1.00px;height:19.79px;background:repeating-linear-gradient(180deg,#c8c8cc 0,#c8c8cc 4px,transparent 4px,transparent 6.6px);"></div>
<div class="r" style="left:503.20px;top:316.56px;width:1.00px;height:19.79px;background:repeating-linear-gradient(180deg,#c8c8cc 0,#c8c8cc 4px,transparent 4px,transparent 6.6px);"></div>
<div class="r" style="left:609.10px;top:316.56px;width:1.00px;height:19.79px;background:repeating-linear-gradient(180deg,#c8c8cc 0,#c8c8cc 4px,transparent 4px,transparent 6.6px);"></div>
<div class="r" style="left:714.20px;top:316.56px;width:1.00px;height:19.79px;background:repeating-linear-gradient(180deg,#c8c8cc 0,#c8c8cc 4px,transparent 4px,transparent 6.6px);"></div>
<div class="r" style="left:808.70px;top:316.56px;width:1.00px;height:19.79px;background:repeating-linear-gradient(180deg,#c8c8cc 0,#c8c8cc 4px,transparent 4px,transparent 6.6px);"></div>
<div class="r" style="left:57.00px;top:321.16px;width:11.20px;height:10.60px;background:#fff;border:1px solid #555;border-radius:1px;"></div>
<div class="t" style="left:4.20px;top:322.00px;font-size:9.4px;line-height:9.4px;color:#1e1e1e;">17</div>
<div class="t" style="left:77.50px;top:321.08px;font-size:11.2px;line-height:11.2px;color:#1e1e1e;">02.02.03</div>
<div class="t" style="left:191.80px;top:320.74px;font-size:11.6px;line-height:11.6px;color:#1e1e1e;">Устройство монолитной входной лестницы</div>
<div class="t" style="left:512.00px;top:320.89px;font-size:11.42px;line-height:11.42px;color:#1e1e1e;">28.05.2025 09:00</div>
<div class="t" style="left:618.00px;top:320.89px;font-size:11.42px;line-height:11.42px;color:#1e1e1e;">29.05.2025 18:00</div>
<div class="t" style="left:744.50px;width:60px;text-align:right;top:320.78px;font-size:11.55px;line-height:11.55px;color:#1e1e1e;">86</div>
<div class="t" style="left:4.20px;top:341.79px;font-size:9.4px;line-height:9.4px;color:#fff;">18</div>
<div class="t" style="left:77.50px;top:340.86px;font-size:11.2px;line-height:11.2px;color:#fff;font-weight:700;">02.03</div>
<div class="t" style="left:191.80px;top:340.53px;font-size:11.6px;line-height:11.6px;color:#fff;font-weight:700;letter-spacing:-0.58px;">Монолитные работы надземной части</div>
<div class="t" style="left:512.00px;top:340.74px;font-size:11.35px;line-height:11.35px;color:#fff;font-weight:700;">26.05.2025 09:00</div>
<div class="t" style="left:618.00px;top:340.74px;font-size:11.35px;line-height:11.35px;color:#fff;font-weight:700;">21.06.2025 18:00</div>
<div class="t" style="left:744.50px;width:60px;text-align:right;top:340.57px;font-size:11.55px;line-height:11.55px;color:#fff;font-weight:700;">0</div>
<div class="r" style="left:55.00px;top:375.31px;width:760.00px;height:1.00px;background:repeating-linear-gradient(90deg,#c8c8cc 0,#c8c8cc 3px,transparent 3px,transparent 5px);"></div>
<div class="r" style="left:187.00px;top:356.13px;width:1.00px;height:19.79px;background:repeating-linear-gradient(180deg,#c8c8cc 0,#c8c8cc 4px,transparent 4px,transparent 6.6px);"></div>
<div class="r" style="left:503.20px;top:356.13px;width:1.00px;height:19.79px;background:repeating-linear-gradient(180deg,#c8c8cc 0,#c8c8cc 4px,transparent 4px,transparent 6.6px);"></div>
<div class="r" style="left:609.10px;top:356.13px;width:1.00px;height:19.79px;background:repeating-linear-gradient(180deg,#c8c8cc 0,#c8c8cc 4px,transparent 4px,transparent 6.6px);"></div>
<div class="r" style="left:714.20px;top:356.13px;width:1.00px;height:19.79px;background:repeating-linear-gradient(180deg,#c8c8cc 0,#c8c8cc 4px,transparent 4px,transparent 6.6px);"></div>
<div class="r" style="left:808.70px;top:356.13px;width:1.00px;height:19.79px;background:repeating-linear-gradient(180deg,#c8c8cc 0,#c8c8cc 4px,transparent 4px,transparent 6.6px);"></div>
<div class="r" style="left:57.00px;top:360.73px;width:11.20px;height:10.60px;background:#fff;border:1px solid #555;border-radius:1px;"></div>
<div class="t" style="left:4.20px;top:361.57px;font-size:9.4px;line-height:9.4px;color:#1e1e1e;">19</div>
<div class="t" style="left:77.50px;top:360.65px;font-size:11.2px;line-height:11.2px;color:#1e1e1e;">02.03.01</div>
<div class="t" style="left:191.80px;top:360.31px;font-size:11.6px;line-height:11.6px;color:#1e1e1e;">Устройство наружных монолитных стен 1-го этажа</div>
<div class="t" style="left:512.00px;top:360.46px;font-size:11.42px;line-height:11.42px;color:#1e1e1e;">26.05.2025 09:00</div>
<div class="t" style="left:618.00px;top:360.46px;font-size:11.42px;line-height:11.42px;color:#1e1e1e;">27.05.2025 18:00</div>
<div class="t" style="left:744.50px;width:60px;text-align:right;top:360.35px;font-size:11.55px;line-height:11.55px;color:#1e1e1e;">49</div>
<div class="r" style="left:55.00px;top:395.10px;width:760.00px;height:1.00px;background:repeating-linear-gradient(90deg,#c8c8cc 0,#c8c8cc 3px,transparent 3px,transparent 5px);"></div>
<div class="r" style="left:187.00px;top:375.92px;width:1.00px;height:19.79px;background:repeating-linear-gradient(180deg,#c8c8cc 0,#c8c8cc 4px,transparent 4px,transparent 6.6px);"></div>
<div class="r" style="left:503.20px;top:375.92px;width:1.00px;height:19.79px;background:repeating-linear-gradient(180deg,#c8c8cc 0,#c8c8cc 4px,transparent 4px,transparent 6.6px);"></div>
<div class="r" style="left:609.10px;top:375.92px;width:1.00px;height:19.79px;background:repeating-linear-gradient(180deg,#c8c8cc 0,#c8c8cc 4px,transparent 4px,transparent 6.6px);"></div>
<div class="r" style="left:714.20px;top:375.92px;width:1.00px;height:19.79px;background:repeating-linear-gradient(180deg,#c8c8cc 0,#c8c8cc 4px,transparent 4px,transparent 6.6px);"></div>
<div class="r" style="left:808.70px;top:375.92px;width:1.00px;height:19.79px;background:repeating-linear-gradient(180deg,#c8c8cc 0,#c8c8cc 4px,transparent 4px,transparent 6.6px);"></div>
<div class="r" style="left:57.00px;top:380.52px;width:11.20px;height:10.60px;background:#fff;border:1px solid #555;border-radius:1px;"></div>
<div class="t" style="left:4.20px;top:381.36px;font-size:9.4px;line-height:9.4px;color:#1e1e1e;">20</div>
<div class="t" style="left:77.50px;top:380.43px;font-size:11.2px;line-height:11.2px;color:#1e1e1e;">02.03.02</div>
<div class="t" style="left:191.80px;top:380.10px;font-size:11.6px;line-height:11.6px;color:#1e1e1e;">Устройство внутренних монолитных стен 1-го этажа</div>
<div class="t" style="left:512.00px;top:380.25px;font-size:11.42px;line-height:11.42px;color:#1e1e1e;">26.05.2025 09:00</div>
<div class="t" style="left:618.00px;top:380.25px;font-size:11.42px;line-height:11.42px;color:#1e1e1e;">27.05.2025 18:00</div>
<div class="t" style="left:744.50px;width:60px;text-align:right;top:380.14px;font-size:11.55px;line-height:11.55px;color:#1e1e1e;">32</div>
<div class="r" style="left:55.00px;top:414.88px;width:760.00px;height:1.00px;background:repeating-linear-gradient(90deg,#c8c8cc 0,#c8c8cc 3px,transparent 3px,transparent 5px);"></div>
<div class="r" style="left:187.00px;top:395.70px;width:1.00px;height:19.79px;background:repeating-linear-gradient(180deg,#c8c8cc 0,#c8c8cc 4px,transparent 4px,transparent 6.6px);"></div>
<div class="r" style="left:503.20px;top:395.70px;width:1.00px;height:19.79px;background:repeating-linear-gradient(180deg,#c8c8cc 0,#c8c8cc 4px,transparent 4px,transparent 6.6px);"></div>
<div class="r" style="left:609.10px;top:395.70px;width:1.00px;height:19.79px;background:repeating-linear-gradient(180deg,#c8c8cc 0,#c8c8cc 4px,transparent 4px,transparent 6.6px);"></div>
<div class="r" style="left:714.20px;top:395.70px;width:1.00px;height:19.79px;background:repeating-linear-gradient(180deg,#c8c8cc 0,#c8c8cc 4px,transparent 4px,transparent 6.6px);"></div>
<div class="r" style="left:808.70px;top:395.70px;width:1.00px;height:19.79px;background:repeating-linear-gradient(180deg,#c8c8cc 0,#c8c8cc 4px,transparent 4px,transparent 6.6px);"></div>
<div class="r" style="left:57.00px;top:400.30px;width:11.20px;height:10.60px;background:#fff;border:1px solid #555;border-radius:1px;"></div>
<div class="t" style="left:4.20px;top:401.14px;font-size:9.4px;line-height:9.4px;color:#1e1e1e;">21</div>
<div class="t" style="left:77.50px;top:400.22px;font-size:11.2px;line-height:11.2px;color:#1e1e1e;">02.03.03</div>
<div class="t" style="left:191.80px;top:399.88px;font-size:11.6px;line-height:11.6px;color:#1e1e1e;">Устройство монолитной лестницы 1-го этажа</div>
<div class="t" style="left:512.00px;top:400.03px;font-size:11.42px;line-height:11.42px;color:#1e1e1e;">28.05.2025 09:00</div>
<div class="t" style="left:618.00px;top:400.03px;font-size:11.42px;line-height:11.42px;color:#1e1e1e;">02.06.2025 18:00</div>
<div class="t" style="left:744.50px;width:60px;text-align:right;top:399.92px;font-size:11.55px;line-height:11.55px;color:#1e1e1e;">73</div>
<div class="r" style="left:55.00px;top:434.67px;width:760.00px;height:1.00px;background:repeating-linear-gradient(90deg,#c8c8cc 0,#c8c8cc 3px,transparent 3px,transparent 5px);"></div>
<div class="r" style="left:187.00px;top:415.49px;width:1.00px;height:19.79px;background:repeating-linear-gradient(180deg,#c8c8cc 0,#c8c8cc 4px,transparent 4px,transparent 6.6px);"></div>
<div class="r" style="left:503.20px;top:415.49px;width:1.00px;height:19.79px;background:repeating-linear-gradient(180deg,#c8c8cc 0,#c8c8cc 4px,transparent 4px,transparent 6.6px);"></div>
<div class="r" style="left:609.10px;top:415.49px;width:1.00px;height:19.79px;background:repeating-linear-gradient(180deg,#c8c8cc 0,#c8c8cc 4px,transparent 4px,transparent 6.6px);"></div>
<div class="r" style="left:714.20px;top:415.49px;width:1.00px;height:19.79px;background:repeating-linear-gradient(180deg,#c8c8cc 0,#c8c8cc 4px,transparent 4px,transparent 6.6px);"></div>
<div class="r" style="left:808.70px;top:415.49px;width:1.00px;height:19.79px;background:repeating-linear-gradient(180deg,#c8c8cc 0,#c8c8cc 4px,transparent 4px,transparent 6.6px);"></div>
<div class="r" style="left:57.00px;top:420.09px;width:11.20px;height:10.60px;background:#fff;border:1px solid #555;border-radius:1px;"></div>
<div class="t" style="left:4.20px;top:420.93px;font-size:9.4px;line-height:9.4px;color:#1e1e1e;">22</div>
<div class="t" style="left:77.50px;top:420.00px;font-size:11.2px;line-height:11.2px;color:#1e1e1e;">02.03.04</div>
<div class="t" style="left:191.80px;top:419.67px;font-size:11.6px;line-height:11.6px;color:#1e1e1e;">Устройство монолитного перекрытия 1-го этажа</div>
<div class="t" style="left:512.00px;top:419.82px;font-size:11.42px;line-height:11.42px;color:#1e1e1e;">03.06.2025 09:00</div>
<div class="t" style="left:618.00px;top:419.82px;font-size:11.42px;line-height:11.42px;color:#1e1e1e;">05.06.2025 18:00</div>
<div class="t" style="left:744.50px;width:60px;text-align:right;top:419.71px;font-size:11.55px;line-height:11.55px;color:#1e1e1e;">21</div>
<div class="r" style="left:55.00px;top:454.45px;width:760.00px;height:1.00px;background:repeating-linear-gradient(90deg,#c8c8cc 0,#c8c8cc 3px,transparent 3px,transparent 5px);"></div>
<div class="r" style="left:187.00px;top:435.27px;width:1.00px;height:19.79px;background:repeating-linear-gradient(180deg,#c8c8cc 0,#c8c8cc 4px,transparent 4px,transparent 6.6px);"></div>
<div class="r" style="left:503.20px;top:435.27px;width:1.00px;height:19.79px;background:repeating-linear-gradient(180deg,#c8c8cc 0,#c8c8cc 4px,transparent 4px,transparent 6.6px);"></div>
<div class="r" style="left:609.10px;top:435.27px;width:1.00px;height:19.79px;background:repeating-linear-gradient(180deg,#c8c8cc 0,#c8c8cc 4px,transparent 4px,transparent 6.6px);"></div>
<div class="r" style="left:714.20px;top:435.27px;width:1.00px;height:19.79px;background:repeating-linear-gradient(180deg,#c8c8cc 0,#c8c8cc 4px,transparent 4px,transparent 6.6px);"></div>
<div class="r" style="left:808.70px;top:435.27px;width:1.00px;height:19.79px;background:repeating-linear-gradient(180deg,#c8c8cc 0,#c8c8cc 4px,transparent 4px,transparent 6.6px);"></div>
<div class="r" style="left:57.00px;top:439.87px;width:11.20px;height:10.60px;background:#fff;border:1px solid #555;border-radius:1px;"></div>
<div class="t" style="left:4.20px;top:440.71px;font-size:9.4px;line-height:9.4px;color:#1e1e1e;">23</div>
<div class="t" style="left:77.50px;top:439.79px;font-size:11.2px;line-height:11.2px;color:#1e1e1e;">02.03.05</div>
<div class="t" style="left:191.80px;top:439.45px;font-size:11.6px;line-height:11.6px;color:#1e1e1e;">Устройство наружных монолитных стен 2-го этажа</div>
<div class="t" style="left:512.00px;top:439.60px;font-size:11.42px;line-height:11.42px;color:#1e1e1e;">06.06.2025 09:00</div>
<div class="t" style="left:618.00px;top:439.60px;font-size:11.42px;line-height:11.42px;color:#1e1e1e;">07.06.2025 18:00</div>
<div class="t" style="left:744.50px;width:60px;text-align:right;top:439.49px;font-size:11.55px;line-height:11.55px;color:#1e1e1e;">100</div>
<div class="r" style="left:55.00px;top:474.24px;width:760.00px;height:1.00px;background:repeating-linear-gradient(90deg,#c8c8cc 0,#c8c8cc 3px,transparent 3px,transparent 5px);"></div>
<div class="r" style="left:187.00px;top:455.06px;width:1.00px;height:19.79px;background:repeating-linear-gradient(180deg,#c8c8cc 0,#c8c8cc 4px,transparent 4px,transparent 6.6px);"></div>
<div class="r" style="left:503.20px;top:455.06px;width:1.00px;height:19.79px;background:repeating-linear-gradient(180deg,#c8c8cc 0,#c8c8cc 4px,transparent 4px,transparent 6.6px);"></div>
<div class="r" style="left:609.10px;top:455.06px;width:1.00px;height:19.79px;background:repeating-linear-gradient(180deg,#c8c8cc 0,#c8c8cc 4px,transparent 4px,transparent 6.6px);"></div>
<div class="r" style="left:714.20px;top:455.06px;width:1.00px;height:19.79px;background:repeating-linear-gradient(180deg,#c8c8cc 0,#c8c8cc 4px,transparent 4px,transparent 6.6px);"></div>
<div class="r" style="left:808.70px;top:455.06px;width:1.00px;height:19.79px;background:repeating-linear-gradient(180deg,#c8c8cc 0,#c8c8cc 4px,transparent 4px,transparent 6.6px);"></div>
<div class="r" style="left:57.00px;top:459.66px;width:11.20px;height:10.60px;background:#fff;border:1px solid #555;border-radius:1px;"></div>
<div class="t" style="left:4.20px;top:460.50px;font-size:9.4px;line-height:9.4px;color:#1e1e1e;">24</div>
<div class="t" style="left:77.50px;top:459.57px;font-size:11.2px;line-height:11.2px;color:#1e1e1e;">02.03.06</div>
<div class="t" style="left:191.80px;top:459.24px;font-size:11.6px;line-height:11.6px;color:#1e1e1e;">Устройство внутренних монолитных стен 2-го этажа</div>
<div class="t" style="left:512.00px;top:459.39px;font-size:11.42px;line-height:11.42px;color:#1e1e1e;">06.06.2025 09:00</div>
<div class="t" style="left:618.00px;top:459.39px;font-size:11.42px;line-height:11.42px;color:#1e1e1e;">07.06.2025 18:00</div>
<div class="t" style="left:744.50px;width:60px;text-align:right;top:459.28px;font-size:11.55px;line-height:11.55px;color:#1e1e1e;">100</div>
<div class="r" style="left:55.00px;top:494.03px;width:760.00px;height:1.00px;background:repeating-linear-gradient(90deg,#c8c8cc 0,#c8c8cc 3px,transparent 3px,transparent 5px);"></div>
<div class="r" style="left:187.00px;top:474.84px;width:1.00px;height:19.79px;background:repeating-linear-gradient(180deg,#c8c8cc 0,#c8c8cc 4px,transparent 4px,transparent 6.6px);"></div>
<div class="r" style="left:503.20px;top:474.84px;width:1.00px;height:19.79px;background:repeating-linear-gradient(180deg,#c8c8cc 0,#c8c8cc 4px,transparent 4px,transparent 6.6px);"></div>
<div class="r" style="left:609.10px;top:474.84px;width:1.00px;height:19.79px;background:repeating-linear-gradient(180deg,#c8c8cc 0,#c8c8cc 4px,transparent 4px,transparent 6.6px);"></div>
<div class="r" style="left:714.20px;top:474.84px;width:1.00px;height:19.79px;background:repeating-linear-gradient(180deg,#c8c8cc 0,#c8c8cc 4px,transparent 4px,transparent 6.6px);"></div>
<div class="r" style="left:808.70px;top:474.84px;width:1.00px;height:19.79px;background:repeating-linear-gradient(180deg,#c8c8cc 0,#c8c8cc 4px,transparent 4px,transparent 6.6px);"></div>
<div class="r" style="left:57.00px;top:479.44px;width:11.20px;height:10.60px;background:#fff;border:1px solid #555;border-radius:1px;"></div>
<div class="t" style="left:4.20px;top:480.28px;font-size:9.4px;line-height:9.4px;color:#1e1e1e;">25</div>
<div class="t" style="left:77.50px;top:479.36px;font-size:11.2px;line-height:11.2px;color:#1e1e1e;">02.03.07</div>
<div class="t" style="left:191.80px;top:479.02px;font-size:11.6px;line-height:11.6px;color:#1e1e1e;">Устройство монолитной лестницы 2-го этажа</div>
<div class="t" style="left:512.00px;top:479.17px;font-size:11.42px;line-height:11.42px;color:#1e1e1e;">08.06.2025 09:00</div>
<div class="t" style="left:618.00px;top:479.17px;font-size:11.42px;line-height:11.42px;color:#1e1e1e;">13.06.2025 18:00</div>
<div class="t" style="left:744.50px;width:60px;text-align:right;top:479.06px;font-size:11.55px;line-height:11.55px;color:#1e1e1e;">100</div>
</div>
<div class="r" style="left:851.60px;top:77.50px;width:5.40px;height:530.40px;background:#f4f4f6;"></div>
<div class="r" style="left:852.40px;top:79.00px;width:4.60px;height:68.50px;background:#d4d4d8;border-radius:2.3px;"></div>
<div class="r" style="left:40.00px;top:607.90px;width:817.00px;height:5.20px;background:#f3f3f5;"></div>
<div class="r" style="left:40.00px;top:608.20px;width:390.70px;height:4.70px;background:#dcdcdf;border-radius:2.3px;"></div>
<div class="r" style="left:861.00px;top:38.00px;width:1057.00px;height:38.00px;background:#f0f0f3;"></div>
<div class="r" style="left:866.40px;top:41.40px;width:156.60px;height:31.20px;background:#fff;border:1px solid #c6c6cb;border-radius:4px;"></div>
<div class="t" style="left:876.50px;top:49.99px;font-size:13.6px;line-height:13.6px;color:#1e1e1e;">Диаграмма Ганта</div>
<svg class="r" style="left:996.00px;top:53.50px;" width="11" height="7" viewBox="0 0 11 7"><path d="M0 0h11L5.5 6z" fill="#4d4d52"/></svg>
<div class="r" style="left:861.00px;top:77.50px;width:1057.00px;height:45.00px;background:#fff;"></div>
<div class="r" style="left:861.00px;top:90.80px;width:1057.00px;height:1.30px;background:#d6d6da;"></div>
<div class="r" style="left:861.00px;top:105.90px;width:1057.00px;height:1.30px;background:#d6d6da;"></div>
<div class="r" style="left:861.00px;top:121.10px;width:1052.00px;height:1.30px;background:#d6d6da;"></div>
<div class="t" style="left:1377.00px;top:78.27px;font-size:11.5px;line-height:11.5px;color:#222;">2025</div>
<div class="t" style="left:863.40px;top:93.57px;font-size:11.5px;line-height:11.5px;color:#222;">апрель</div>
<div class="r" style="left:911.30px;top:91.50px;width:1.20px;height:14.50px;background:#d6d6da;"></div>
<div class="t" style="left:1404.00px;top:93.57px;font-size:11.5px;line-height:11.5px;color:#222;">май</div>
<div class="r" style="left:872.92px;top:106.50px;width:1.20px;height:14.50px;background:#d6d6da;"></div>
<div class="t" style="left:873.91px;width:36px;text-align:center;top:108.17px;font-size:11.5px;line-height:11.5px;color:#222;">30</div>
<div class="r" style="left:911.30px;top:106.50px;width:1.20px;height:14.50px;background:#d6d6da;"></div>
<div class="t" style="left:912.29px;width:36px;text-align:center;top:108.17px;font-size:11.5px;line-height:11.5px;color:#222;">1</div>
<div class="r" style="left:949.68px;top:106.50px;width:1.20px;height:14.50px;background:#d6d6da;"></div>
<div class="t" style="left:950.67px;width:36px;text-align:center;top:108.17px;font-size:11.5px;line-height:11.5px;color:#222;">2</div>
<div class="r" style="left:988.06px;top:106.50px;width:1.20px;height:14.50px;background:#d6d6da;"></div>
<div class="t" style="left:989.05px;width:36px;text-align:center;top:108.17px;font-size:11.5px;line-height:11.5px;color:#222;">3</div>
<div class="r" style="left:1026.44px;top:106.50px;width:1.20px;height:14.50px;background:#d6d6da;"></div>
<div class="t" style="left:1027.43px;width:36px;text-align:center;top:108.17px;font-size:11.5px;line-height:11.5px;color:#222;">4</div>
<div class="r" style="left:1064.82px;top:106.50px;width:1.20px;height:14.50px;background:#d6d6da;"></div>
<div class="t" style="left:1065.81px;width:36px;text-align:center;top:108.17px;font-size:11.5px;line-height:11.5px;color:#222;">5</div>
<div class="r" style="left:1103.20px;top:106.50px;width:1.20px;height:14.50px;background:#d6d6da;"></div>
<div class="t" style="left:1104.19px;width:36px;text-align:center;top:108.17px;font-size:11.5px;line-height:11.5px;color:#222;">6</div>
<div class="r" style="left:1141.58px;top:106.50px;width:1.20px;height:14.50px;background:#d6d6da;"></div>
<div class="t" style="left:1142.57px;width:36px;text-align:center;top:108.17px;font-size:11.5px;line-height:11.5px;color:#222;">7</div>
<div class="r" style="left:1179.96px;top:106.50px;width:1.20px;height:14.50px;background:#d6d6da;"></div>
<div class="t" style="left:1180.95px;width:36px;text-align:center;top:108.17px;font-size:11.5px;line-height:11.5px;color:#222;">8</div>
<div class="r" style="left:1218.34px;top:106.50px;width:1.20px;height:14.50px;background:#d6d6da;"></div>
<div class="t" style="left:1219.33px;width:36px;text-align:center;top:108.17px;font-size:11.5px;line-height:11.5px;color:#222;">9</div>
<div class="r" style="left:1256.72px;top:106.50px;width:1.20px;height:14.50px;background:#d6d6da;"></div>
<div class="t" style="left:1257.71px;width:36px;text-align:center;top:108.17px;font-size:11.5px;line-height:11.5px;color:#222;">10</div>
<div class="r" style="left:1295.10px;top:106.50px;width:1.20px;height:14.50px;background:#d6d6da;"></div>
<div class="t" style="left:1296.09px;width:36px;text-align:center;top:108.17px;font-size:11.5px;line-height:11.5px;color:#222;">11</div>
<div class="r" style="left:1333.48px;top:106.50px;width:1.20px;height:14.50px;background:#d6d6da;"></div>
<div class="t" style="left:1334.47px;width:36px;text-align:center;top:108.17px;font-size:11.5px;line-height:11.5px;color:#222;">12</div>
<div class="r" style="left:1371.86px;top:106.50px;width:1.20px;height:14.50px;background:#d6d6da;"></div>
<div class="t" style="left:1372.85px;width:36px;text-align:center;top:108.17px;font-size:11.5px;line-height:11.5px;color:#222;">13</div>
<div class="r" style="left:1410.24px;top:106.50px;width:1.20px;height:14.50px;background:#d6d6da;"></div>
<div class="t" style="left:1411.23px;width:36px;text-align:center;top:108.17px;font-size:11.5px;line-height:11.5px;color:#222;">14</div>
<div class="r" style="left:1448.62px;top:106.50px;width:1.20px;height:14.50px;background:#d6d6da;"></div>
<div class="t" style="left:1449.61px;width:36px;text-align:center;top:108.17px;font-size:11.5px;line-height:11.5px;color:#222;">15</div>
<div class="r" style="left:1487.00px;top:106.50px;width:1.20px;height:14.50px;background:#d6d6da;"></div>
<div class="t" style="left:1487.99px;width:36px;text-align:center;top:108.17px;font-size:11.5px;line-height:11.5px;color:#222;">16</div>
<div class="r" style="left:1525.38px;top:106.50px;width:1.20px;height:14.50px;background:#d6d6da;"></div>
<div class="t" style="left:1526.37px;width:36px;text-align:center;top:108.17px;font-size:11.5px;line-height:11.5px;color:#222;">17</div>
<div class="r" style="left:1563.76px;top:106.50px;width:1.20px;height:14.50px;background:#d6d6da;"></div>
<div class="t" style="left:1564.75px;width:36px;text-align:center;top:108.17px;font-size:11.5px;line-height:11.5px;color:#222;">18</div>
<div class="r" style="left:1602.14px;top:106.50px;width:1.20px;height:14.50px;background:#d6d6da;"></div>
<div class="t" style="left:1603.13px;width:36px;text-align:center;top:108.17px;font-size:11.5px;line-height:11.5px;color:#222;">19</div>
<div class="r" style="left:1640.52px;top:106.50px;width:1.20px;height:14.50px;background:#d6d6da;"></div>
<div class="t" style="left:1641.51px;width:36px;text-align:center;top:108.17px;font-size:11.5px;line-height:11.5px;color:#222;">20</div>
<div class="r" style="left:1678.90px;top:106.50px;width:1.20px;height:14.50px;background:#d6d6da;"></div>
<div class="t" style="left:1679.89px;width:36px;text-align:center;top:108.17px;font-size:11.5px;line-height:11.5px;color:#222;">21</div>
<div class="r" style="left:1717.28px;top:106.50px;width:1.20px;height:14.50px;background:#d6d6da;"></div>
<div class="t" style="left:1718.27px;width:36px;text-align:center;top:108.17px;font-size:11.5px;line-height:11.5px;color:#222;">22</div>
<div class="r" style="left:1755.66px;top:106.50px;width:1.20px;height:14.50px;background:#d6d6da;"></div>
<div class="t" style="left:1756.65px;width:36px;text-align:center;top:108.17px;font-size:11.5px;line-height:11.5px;color:#222;">23</div>
<div class="r" style="left:1794.04px;top:106.50px;width:1.20px;height:14.50px;background:#d6d6da;"></div>
<div class="t" style="left:1795.03px;width:36px;text-align:center;top:108.17px;font-size:11.5px;line-height:11.5px;color:#222;">24</div>
<div class="r" style="left:1832.42px;top:106.50px;width:1.20px;height:14.50px;background:#d6d6da;"></div>
<div class="t" style="left:1833.41px;width:36px;text-align:center;top:108.17px;font-size:11.5px;line-height:11.5px;color:#222;">25</div>
<div class="r" style="left:1870.80px;top:106.50px;width:1.20px;height:14.50px;background:#d6d6da;"></div>
<div class="t" style="left:1871.79px;width:36px;text-align:center;top:108.17px;font-size:11.5px;line-height:11.5px;color:#222;">26</div>
<div class="r" style="left:1909.18px;top:106.50px;width:1.20px;height:14.50px;background:#d6d6da;"></div>
<div class="r" style="left:861px;top:122.7px;width:1051.8px;height:490.3px;overflow:hidden;background:#fff;">
<div class="r" style="left:0.00px;top:59.36px;width:1051.80px;height:19.79px;background:#fffbcc;"></div>
<svg class="r" style="left:0;top:0" width="1051.8" height="514.41"><path d="M1.5 19.79H1051.8M1.5 39.57H1051.8M1.5 59.36H1051.8M1.5 79.14H1051.8M1.5 98.92H1051.8M1.5 118.71H1051.8M1.5 138.50H1051.8M1.5 158.28H1051.8M1.5 178.06H1051.8M1.5 197.85H1051.8M1.5 217.63H1051.8M1.5 237.42H1051.8M1.5 257.20H1051.8M1.5 276.99H1051.8M1.5 296.77H1051.8M1.5 316.56H1051.8M1.5 336.35H1051.8M1.5 356.13H1051.8M1.5 375.92H1051.8M1.5 395.70H1051.8M1.5 415.49H1051.8M1.5 435.27H1051.8M1.5 455.06H1051.8M1.5 474.84H1051.8M1.5 494.62H1051.8M1.5 514.41H1051.8" stroke="#d6d6da" stroke-width="1.1" stroke-dasharray="1.6 3.72" fill="none"/></svg>
<div class="r" style="left:-11.77px;top:3.30px;width:1073.57px;height:3.40px;background:#aaaaaa;"></div>
<div class="r" style="left:-11.77px;top:11.20px;width:1073.57px;height:3.80px;background:#000;"></div>
<div class="r" style="left:-11.77px;top:23.09px;width:1073.57px;height:3.40px;background:#aaaaaa;"></div>
<div class="r" style="left:-11.77px;top:30.98px;width:1073.57px;height:3.80px;background:#000;"></div>
<svg class="r" style="left:0;top:0" width="1051.8" height="494.625"><path d="M-11.767499999999927 42.67H232.90499999999997V49.57L227.40499999999997 46.67H-6.267499999999927L-11.767499999999927 49.57Z" fill="#aaa"/><path d="M-11.767499999999927 50.769999999999996H232.90499999999997V57.97L227.40499999999997 54.57H-6.267499999999927L-11.767499999999927 57.97Z" fill="#000"/></svg>
<div class="t" style="left:251.10px;top:44.75px;font-size:11.6px;line-height:11.6px;color:#4d4d50;font-weight:700;letter-spacing:-0.55px;">Земляные работы</div>
<div class="r" style="left:-11.77px;top:64.86px;width:91.85px;height:4.60px;background:#dadada;border:1px solid #7a7a7a;border-top-color:#939393;"></div>
<div class="r" style="left:-11.77px;top:71.36px;width:0.00px;height:6.60px;background:#0a78e0;"></div>
<div class="r" style="left:-11.77px;top:71.36px;width:91.15px;height:6.60px;background:#22c691;"></div>
<div class="t" style="left:97.88px;top:63.74px;font-size:11.6px;line-height:11.6px;color:#555558;">Вертикальная планировка территории</div>
<div class="r" style="left:103.37px;top:84.64px;width:53.47px;height:4.60px;background:#dadada;border:1px solid #7a7a7a;border-top-color:#939393;"></div>
<div class="r" style="left:103.37px;top:91.14px;width:0.00px;height:6.60px;background:#0a78e0;"></div>
<div class="r" style="left:103.37px;top:91.14px;width:52.77px;height:6.60px;background:#22c691;"></div>
<svg class="r" style="left:0;top:0" width="1051.8" height="494.625"><clipPath id="c4"><rect x="103.37250000000006" y="91.14" width="52.77249999999992" height="6.2"/></clipPath><path clip-path="url(#c4)" d="M103.37 94.23 L103.87 94.61 L104.37 94.99 L104.87 95.32 L105.37 95.57 L105.87 95.73 L106.37 95.79 L106.87 95.73 L107.37 95.57 L107.87 95.32 L108.37 94.99 L108.87 94.61 L109.37 94.23 L109.87 93.86 L110.37 93.53 L110.87 93.29 L111.37 93.14 L111.87 93.09 L112.37 93.16 L112.87 93.33 L113.37 93.59 L113.87 93.93 L114.37 94.30 L114.87 94.69 L115.37 95.06 L115.87 95.37 L116.37 95.61 L116.87 95.75 L117.37 95.79 L117.87 95.71 L118.37 95.53 L118.87 95.26 L119.37 94.92 L119.87 94.54 L120.37 94.15 L120.87 93.79 L121.37 93.48 L121.87 93.25 L122.37 93.12 L122.87 93.10 L123.37 93.18 L123.87 93.38 L124.37 93.66 L124.87 94.00 L125.37 94.38 L125.87 94.77 L126.37 95.13 L126.87 95.43 L127.37 95.65 L127.87 95.77 L128.37 95.78 L128.87 95.68 L129.37 95.48 L129.87 95.19 L130.37 94.84 L130.87 94.46 L131.37 94.07 L131.87 93.72 L132.37 93.43 L132.87 93.21 L133.37 93.10 L133.87 93.10 L134.37 93.21 L134.87 93.43 L135.37 93.72 L135.87 94.07 L136.37 94.46 L136.87 94.84 L137.37 95.19 L137.87 95.48 L138.37 95.68 L138.87 95.78 L139.37 95.77 L139.87 95.65 L140.37 95.43 L140.87 95.13 L141.37 94.77 L141.87 94.38 L142.37 94.00 L142.87 93.66 L143.37 93.38 L143.87 93.18 L144.37 93.10 L144.87 93.12 L145.37 93.25 L145.87 93.48 L146.37 93.79 L146.87 94.15 L147.37 94.54 L147.87 94.92 L148.37 95.26 L148.87 95.53 L149.37 95.71 L149.87 95.79 L150.37 95.75 L150.87 95.61 L151.37 95.37 L151.87 95.06 L152.37 94.69 L152.87 94.30 L153.37 93.93 L153.87 93.59 L154.37 93.33 L154.87 93.16 L155.37 93.09 L155.87 93.14 L156.37 93.29" fill="none" stroke="#fff" stroke-width="1.25"/></svg>
<div class="t" style="left:174.64px;top:83.52px;font-size:11.6px;line-height:11.6px;color:#555558;">Устройство котлована</div>
<div class="r" style="left:180.13px;top:104.42px;width:53.47px;height:4.60px;background:#dadada;border:1px solid #7a7a7a;border-top-color:#939393;"></div>
<div class="r" style="left:180.13px;top:110.92px;width:34.30px;height:6.60px;background:#0a78e0;"></div>
<div class="r" style="left:214.43px;top:110.92px;width:18.47px;height:6.60px;background:#22c691;"></div>
<svg class="r" style="left:0;top:0" width="1051.8" height="494.625"><clipPath id="c5"><rect x="180.13249999999994" y="110.925" width="52.772500000000036" height="6.2"/></clipPath><path clip-path="url(#c5)" d="M180.13 114.01 L180.63 114.40 L181.13 114.77 L181.63 115.10 L182.13 115.36 L182.63 115.52 L183.13 115.57 L183.63 115.52 L184.13 115.36 L184.63 115.10 L185.13 114.77 L185.63 114.40 L186.13 114.01 L186.63 113.64 L187.13 113.32 L187.63 113.07 L188.13 112.92 L188.63 112.88 L189.13 112.94 L189.63 113.11 L190.13 113.38 L190.63 113.71 L191.13 114.09 L191.63 114.48 L192.13 114.84 L192.63 115.16 L193.13 115.40 L193.63 115.54 L194.13 115.57 L194.63 115.50 L195.13 115.31 L195.63 115.04 L196.13 114.70 L196.63 114.32 L197.13 113.94 L197.63 113.57 L198.13 113.26 L198.63 113.03 L199.13 112.90 L199.63 112.88 L200.13 112.97 L200.63 113.16 L201.13 113.44 L201.63 113.79 L202.13 114.17 L202.63 114.55 L203.13 114.91 L203.63 115.21 L204.13 115.43 L204.63 115.55 L205.13 115.57 L205.63 115.47 L206.13 115.26 L206.63 114.98 L207.13 114.63 L207.63 114.24 L208.13 113.86 L208.63 113.51 L209.13 113.21 L209.63 113.00 L210.13 112.89 L210.63 112.89 L211.13 113.00 L211.63 113.21 L212.13 113.51 L212.63 113.86 L213.13 114.24 L213.63 114.63 L214.13 114.98 L214.63 115.26 L215.13 115.47 L215.63 115.57 L216.13 115.55 L216.63 115.43 L217.13 115.21 L217.63 114.91 L218.13 114.55 L218.63 114.17 L219.13 113.79 L219.63 113.44 L220.13 113.16 L220.63 112.97 L221.13 112.88 L221.63 112.90 L222.13 113.03 L222.63 113.26 L223.13 113.57 L223.63 113.94 L224.13 114.32 L224.63 114.70 L225.13 115.04 L225.63 115.31 L226.13 115.50 L226.63 115.57 L227.13 115.54 L227.63 115.40 L228.13 115.16 L228.63 114.84 L229.13 114.48 L229.63 114.09 L230.13 113.71 L230.63 113.38 L231.13 113.11 L231.63 112.94 L232.13 112.88 L232.63 112.92 L233.13 113.07" fill="none" stroke="#fff" stroke-width="1.25"/></svg>
<div class="t" style="left:251.40px;top:103.31px;font-size:11.6px;line-height:11.6px;color:#555558;">Устройство песчаного основания</div>
<svg class="r" style="left:0;top:0" width="1051.8" height="494.625"><path d="M256.8924999999999 121.81H1061.8V125.81H262.3924999999999L256.8924999999999 128.71Z" fill="#aaa"/><path d="M256.8924999999999 129.91H1061.8V133.71H262.3924999999999L256.8924999999999 137.11Z" fill="#000"/></svg>
<svg class="r" style="left:0;top:0" width="1051.8" height="494.625"><path d="M256.8924999999999 141.595H731.845V148.495L726.345 145.595H262.3924999999999L256.8924999999999 148.495Z" fill="#aaa"/><path d="M256.8924999999999 149.695H731.845V156.895L726.345 153.495H262.3924999999999L256.8924999999999 156.895Z" fill="#000"/></svg>
<div class="t" style="left:750.05px;top:143.68px;font-size:11.6px;line-height:11.6px;color:#4d4d50;font-weight:700;letter-spacing:-0.55px;">Фундамент</div>
<div class="r" style="left:256.89px;top:163.78px;width:53.47px;height:4.60px;background:#dadada;border:1px solid #7a7a7a;border-top-color:#939393;"></div>
<div class="r" style="left:256.89px;top:170.28px;width:28.50px;height:6.60px;background:#0a78e0;"></div>
<div class="r" style="left:285.39px;top:170.28px;width:24.28px;height:6.60px;background:#22c691;"></div>
<div class="t" style="left:328.16px;top:162.66px;font-size:11.6px;line-height:11.6px;color:#555558;">Устройство буронабивных свай захватка 1</div>
<div class="r" style="left:333.65px;top:183.56px;width:53.47px;height:4.60px;background:#dadada;border:1px solid #7a7a7a;border-top-color:#939393;"></div>
<div class="r" style="left:333.65px;top:190.06px;width:12.14px;height:6.60px;background:#0a78e0;"></div>
<div class="r" style="left:345.79px;top:190.06px;width:40.63px;height:6.60px;background:#22c691;"></div>
<div class="t" style="left:404.93px;top:182.45px;font-size:11.6px;line-height:11.6px;color:#555558;">Устройство буронабивных свай захватка 2</div>
<div class="r" style="left:410.41px;top:203.35px;width:53.47px;height:4.60px;background:#dadada;border:1px solid #7a7a7a;border-top-color:#939393;"></div>
<div class="r" style="left:410.41px;top:209.85px;width:45.91px;height:6.60px;background:#0a78e0;"></div>
<div class="r" style="left:456.32px;top:209.85px;width:6.86px;height:6.60px;background:#22c691;"></div>
<div class="t" style="left:481.68px;top:202.23px;font-size:11.6px;line-height:11.6px;color:#555558;">Устройство буронабивных свай захватка 3</div>
<div class="r" style="left:487.17px;top:223.13px;width:53.47px;height:4.60px;background:#dadada;border:1px solid #7a7a7a;border-top-color:#939393;"></div>
<div class="r" style="left:487.17px;top:229.63px;width:32.19px;height:6.60px;background:#0a78e0;"></div>
<div class="r" style="left:519.36px;top:229.63px;width:20.58px;height:6.60px;background:#22c691;"></div>
<div class="t" style="left:558.45px;top:222.02px;font-size:11.6px;line-height:11.6px;color:#555558;">Устройство буронабивных свай захватка 4</div>
<div class="r" style="left:563.93px;top:242.92px;width:168.61px;height:4.60px;background:#dadada;border:1px solid #7a7a7a;border-top-color:#939393;"></div>
<div class="r" style="left:563.93px;top:249.42px;width:20.15px;height:6.60px;background:#0a78e0;"></div>
<div class="r" style="left:584.08px;top:249.42px;width:147.76px;height:6.60px;background:#22c691;"></div>
<div class="t" style="left:750.35px;top:241.80px;font-size:11.6px;line-height:11.6px;color:#555558;">Устройство фундаментной плиты</div>
<svg class="r" style="left:0;top:0" width="1051.8" height="494.625"><path d="M755.8325 260.305H1061.8V264.305H761.3325L755.8325 267.205Z" fill="#aaa"/><path d="M755.8325 268.405H1061.8V272.205H761.3325L755.8325 275.60499999999996Z" fill="#000"/></svg>
<div class="r" style="left:755.83px;top:282.49px;width:53.47px;height:4.60px;background:#dadada;border:1px solid #7a7a7a;border-top-color:#939393;"></div>
<div class="r" style="left:755.83px;top:288.99px;width:23.22px;height:6.60px;background:#0a78e0;"></div>
<div class="r" style="left:779.05px;top:288.99px;width:29.55px;height:6.60px;background:#22c691;"></div>
<div class="t" style="left:827.11px;top:281.37px;font-size:11.6px;line-height:11.6px;color:#555558;">Устройство монолитных стен цокольного этажа</div>
<div class="r" style="left:832.59px;top:302.27px;width:168.61px;height:4.60px;background:#dadada;border:1px solid #7a7a7a;border-top-color:#939393;"></div>
<div class="r" style="left:832.59px;top:308.77px;width:40.30px;height:6.60px;background:#0a78e0;"></div>
<div class="r" style="left:872.89px;top:308.77px;width:127.61px;height:6.60px;background:#22c691;"></div>
<div class="t" style="left:1019.01px;top:301.16px;font-size:11.6px;line-height:11.6px;color:#555558;">Устройство монолитного перекрытия цокольного этажа</div>
<svg class="r" style="left:0;top:0" width="1051.8" height="494.625"><path d="M1024.4925 339.44500000000005H1061.8V343.44500000000005H1029.9925L1024.4925 346.345Z" fill="#aaa"/><path d="M1024.4925 347.545H1061.8V351.345H1029.9925L1024.4925 354.745Z" fill="#000"/></svg>
<div class="r" style="left:1024.49px;top:361.63px;width:53.47px;height:4.60px;background:#dadada;border:1px solid #7a7a7a;border-top-color:#939393;"></div>
<div class="r" style="left:1024.49px;top:368.13px;width:25.86px;height:6.60px;background:#0a78e0;"></div>
<div class="r" style="left:1050.35px;top:368.13px;width:26.91px;height:6.60px;background:#22c691;"></div>
<div class="t" style="left:1095.76px;top:360.51px;font-size:11.6px;line-height:11.6px;color:#555558;">Устройство наружных монолитных стен 1-го этажа</div>
<div class="r" style="left:1024.49px;top:381.42px;width:53.47px;height:4.60px;background:#dadada;border:1px solid #7a7a7a;border-top-color:#939393;"></div>
<div class="r" style="left:1024.49px;top:387.92px;width:16.89px;height:6.60px;background:#0a78e0;"></div>
<div class="r" style="left:1041.38px;top:387.92px;width:35.89px;height:6.60px;background:#22c691;"></div>
<div class="t" style="left:1095.76px;top:380.30px;font-size:11.6px;line-height:11.6px;color:#555558;">Устройство внутренних монолитных стен 1-го этажа</div>
<svg class="r" style="left:0;top:0" width="1051.8" height="494.625"><path d="M79.18499999999999 76.355V80.95500000000001H90.38499999999999V94.44H97.37250000000006" fill="none" stroke="#000" stroke-width="1.5"/><path d="M95.87250000000006 90.74L103.37250000000006 94.44L95.87250000000006 98.14Z" fill="#000"/><path d="M155.945 96.14V100.74000000000001H167.14499999999998V114.225H174.13249999999994" fill="none" stroke="#000" stroke-width="1.5"/><path d="M172.63249999999994 110.52499999999999L180.13249999999994 114.225L172.63249999999994 117.925Z" fill="#000"/><path d="M232.70499999999998 115.925V120.525H243.90499999999997V173.58H250.89249999999993" fill="none" stroke="#000" stroke-width="1.5"/><path d="M249.39249999999993 169.88000000000002L256.8924999999999 173.58L249.39249999999993 177.28Z" fill="#000"/><path d="M309.465 175.28V179.88H320.66499999999996V193.365H327.65250000000015" fill="none" stroke="#000" stroke-width="1.5"/><path d="M326.15250000000015 189.66500000000002L333.65250000000015 193.365L326.15250000000015 197.065Z" fill="#000"/><path d="M386.2250000000002 195.065V199.665H397.4250000000002V213.15H404.4124999999999" fill="none" stroke="#000" stroke-width="1.5"/><path d="M402.9124999999999 209.45000000000002L410.4124999999999 213.15L402.9124999999999 216.85Z" fill="#000"/><path d="M462.98499999999996 214.85V219.45H474.18499999999995V232.935H481.1725000000001" fill="none" stroke="#000" stroke-width="1.5"/><path d="M479.6725000000001 229.235L487.1725000000001 232.935L479.6725000000001 236.635Z" fill="#000"/><path d="M539.7450000000001 234.635V239.23499999999999H550.9450000000002V252.72000000000003H557.9324999999999" fill="none" stroke="#000" stroke-width="1.5"/><path d="M556.4324999999999 249.02000000000004L563.9324999999999 252.72000000000003L556.4324999999999 256.42Z" fill="#000"/><path d="M731.645 254.42000000000002V259.02000000000004H742.845V292.29H749.8325" fill="none" stroke="#000" stroke-width="1.5"/><path d="M748.3325 288.59000000000003L755.8325 292.29L748.3325 295.99Z" fill="#000"/><path d="M808.405 293.99V298.59000000000003H819.605V312.075H826.5925000000002" fill="none" stroke="#000" stroke-width="1.5"/><path d="M825.0925000000002 308.375L832.5925000000002 312.075L825.0925000000002 315.775Z" fill="#000"/><path d="M1000.3050000000001 313.775V318.375H1011.5050000000001V371.43H1018.4925000000001" fill="none" stroke="#000" stroke-width="1.5"/><path d="M1016.9925000000001 367.73L1024.4925 371.43L1016.9925000000001 375.13Z" fill="#000"/><path d="M1056.8 378.415H1011.5050000000001V391.21500000000003H1018.4925000000001" fill="none" stroke="#000" stroke-width="1.5"/><path d="M1016.9925000000001 387.51500000000004L1024.4925 391.21500000000003L1016.9925000000001 394.915Z" fill="#000"/></svg>
</div>
<div class="r" style="left:1912.80px;top:122.40px;width:5.20px;height:490.60px;background:#f0f0f3;"></div>
<div class="r" style="left:1913.40px;top:123.60px;width:4.60px;height:60.30px;background:#d4d4d8;border-radius:2.3px;"></div>
<div class="r" style="left:40.00px;top:613.00px;width:1878.00px;height:4.60px;background:#b9b9be;"></div>
<div class="r" style="left:40.00px;top:617.60px;width:1878.00px;height:289.40px;background:#fff;"></div>
<div class="t" style="left:25.60px;width:260px;text-align:center;top:630.63px;font-size:14.5px;line-height:14.5px;color:#2b7bd6;letter-spacing:0.58px;">Карточка работы</div>
<div class="t" style="left:246.80px;width:260px;text-align:center;top:630.63px;font-size:14.5px;line-height:14.5px;color:#333;letter-spacing:0.51px;">Связи работы</div>
<div class="t" style="left:478.50px;width:260px;text-align:center;top:630.63px;font-size:14.5px;line-height:14.5px;color:#333;letter-spacing:0.56px;">Связанные графики</div>
<div class="t" style="left:708.00px;width:260px;text-align:center;top:630.63px;font-size:14.5px;line-height:14.5px;color:#333;letter-spacing:0.74px;">Справочники</div>
<div class="t" style="left:954.00px;width:260px;text-align:center;top:630.63px;font-size:14.5px;line-height:14.5px;color:#333;letter-spacing:0.57px;">Суточное планирование</div>
<div class="t" style="left:1229.00px;width:260px;text-align:center;top:630.63px;font-size:14.5px;line-height:14.5px;color:#333;letter-spacing:0.74px;">Фото / Документация</div>
<div class="t" style="left:1495.00px;width:260px;text-align:center;top:630.63px;font-size:14.5px;line-height:14.5px;color:#333;letter-spacing:0.62px;">Запросы и поручения</div>
<div class="t" style="left:1708.00px;width:260px;text-align:center;top:630.63px;font-size:14.5px;line-height:14.5px;color:#333;letter-spacing:0.19px;">Табели</div>
<div class="r" style="left:40.00px;top:655.80px;width:232.00px;height:2.40px;background:#1b6fd4;"></div>
<div class="t" style="left:54.20px;top:675.40px;font-size:13px;line-height:13px;color:#111;font-weight:700;letter-spacing:-0.3px;">Тип</div>
<div class="t" style="left:54.20px;top:702.50px;font-size:13px;line-height:13px;color:#111;font-weight:700;letter-spacing:-0.9px;">Шифр</div>
<div class="t" style="left:54.20px;top:729.60px;font-size:13px;line-height:13px;color:#111;font-weight:700;letter-spacing:-0.35px;">Статус</div>
<div class="r" style="left:113.40px;top:672.20px;width:164.30px;height:19.50px;background:#fff;border:1px solid #b9b9be;border-radius:4px;"></div>
<div class="t" style="left:124.70px;top:675.42px;font-size:13.5px;line-height:13.5px;color:#1e1e1e;">Работа</div>
<svg class="r" style="left:252.20px;top:678.95px;" width="10" height="6" viewBox="0 0 10 6"><path d="M0 0h10L5 5.5z" fill="#4d4d52"/></svg>
<div class="r" style="left:113.40px;top:699.20px;width:164.30px;height:19.50px;background:#fff;border:1px solid #b9b9be;border-radius:4px;"></div>
<div class="t" style="left:124.70px;top:702.42px;font-size:13.5px;line-height:13.5px;color:#1e1e1e;">01.01</div>
<div class="r" style="left:113.40px;top:726.20px;width:164.30px;height:19.50px;background:#fff;border:1px solid #b9b9be;border-radius:4px;"></div>
<div class="t" style="left:124.70px;top:729.42px;font-size:13.5px;line-height:13.5px;color:#1e1e1e;">Не начата</div>
<svg class="r" style="left:252.20px;top:732.95px;" width="10" height="6" viewBox="0 0 10 6"><path d="M0 0h10L5 5.5z" fill="#4d4d52"/></svg>
<div class="r" style="left:285.20px;top:672.20px;width:531.20px;height:44.20px;background:#fff;border:1px solid #b9b9be;border-radius:4px;"></div>
<div class="t" style="left:295.80px;top:683.10px;font-size:16.3px;line-height:16.3px;color:#111;font-weight:700;">Вертикальная планировка территории</div>
<div class="t" style="left:285.20px;top:729.34px;font-size:13.3px;line-height:13.3px;color:#222;">Сценарий</div>
<div class="r" style="left:351.00px;top:724.20px;width:465.40px;height:19.20px;background:#efeff2;border-radius:3px;"></div>
<div class="t" style="left:415.00px;width:200px;text-align:center;top:727.47px;font-size:12.2px;line-height:12.2px;color:#222;">Сценария нет</div>
<div class="r" style="left:824.00px;top:672.20px;width:146.40px;height:73.30px;background:#fff;border:1.3px solid #6aa5e8;border-radius:4px;"></div>
<div class="r" style="left:824.00px;top:672.20px;width:146.40px;height:30.20px;background:#5b9bdf;border-radius:4px 4px 0 0;"></div>
<div class="r" style="left:855.80px;top:665.20px;width:8.70px;height:12.40px;background:#fff;border:1.3px solid #6aa5e8;border-radius:3px;"></div>
<div class="r" style="left:930.00px;top:665.20px;width:8.70px;height:12.40px;background:#fff;border:1.3px solid #6aa5e8;border-radius:3px;"></div>
<div class="t" style="left:827.40px;width:140px;text-align:center;top:680.64px;font-size:12px;line-height:12px;color:#fff;text-decoration:underline;">PLAN-R: 7 дней</div>
<div class="r" style="left:860.90px;top:706.00px;width:72.20px;height:19.80px;background:#fff;border:1px solid #b9b9be;border-radius:4px;"></div>
<div class="t" style="left:867.00px;width:60px;text-align:center;top:708.95px;font-size:14px;line-height:14px;color:#111;">24</div>
<div class="t" style="left:940.00px;top:710.77px;font-size:11.5px;line-height:11.5px;color:#222;">ч.</div>
<div class="t" style="left:827.20px;width:140px;text-align:center;top:730.58px;font-size:11.6px;line-height:11.6px;color:#222;">Календарных: 3 дн.</div>
<div class="r" style="left:47.00px;top:753.00px;width:923.40px;height:21.80px;background:#22c494;border-radius:2px;"></div>
<div class="t" style="left:63.40px;top:756.36px;font-size:14.7px;line-height:14.7px;color:#fff;">29.04.2025 09:00</div>
<div class="t" style="left:482.30px;width:60px;text-align:center;top:756.61px;font-size:14.4px;line-height:14.4px;color:#fff;">0 %</div>
<div class="t" style="left:804.00px;width:140px;text-align:right;top:756.36px;font-size:14.7px;line-height:14.7px;color:#fff;letter-spacing:-0.17px;">01.05.2025 18:00</div>
<div class="t" style="left:47.50px;top:790.44px;font-size:13.3px;line-height:13.3px;color:#111;font-weight:700;letter-spacing:-0.38px;">Ограничения</div>
<div class="r" style="left:201.00px;top:795.00px;width:770.40px;height:3.00px;background:#b6b6bb;"></div>
<div class="t" style="left:47.50px;top:814.74px;font-size:13.3px;line-height:13.3px;color:#222;">Начало</div>
<div class="r" style="left:107.60px;top:811.40px;width:150.10px;height:19.00px;background:#fff;border:1px solid #b9b9be;border-radius:4px;"></div>
<svg class="r" style="left:232.20px;top:817.90px;" width="10" height="6" viewBox="0 0 10 6"><path d="M0 0h10L5 5.5z" fill="#4d4d52"/></svg>
<div class="t" style="left:682.50px;width:120px;text-align:right;top:814.74px;font-size:13.3px;line-height:13.3px;color:#222;">Окончание</div>
<div class="r" style="left:818.00px;top:811.30px;width:149.20px;height:19.20px;background:#fff;border:1px solid #b9b9be;border-radius:4px;"></div>
<svg class="r" style="left:941.70px;top:817.90px;" width="10" height="6" viewBox="0 0 10 6"><path d="M0 0h10L5 5.5z" fill="#4d4d52"/></svg>
<div class="r" style="left:47.00px;top:846.00px;width:36.00px;height:17.40px;background:#1b6fd4;border-radius:3px;box-shadow:0 1.5px 2px rgba(0,0,0,.35);"></div>
<svg class="r" style="left:58.00px;top:848.50px;" width="14" height="12" viewBox="0 0 14 12"><path d="M6.5 1L1.5 6l5 5M12 1L7 6l5 5" fill="none" stroke="#fff" stroke-width="1.3"/></svg>
<div class="t" style="left:97.60px;top:847.94px;font-size:13.3px;line-height:13.3px;color:#222;">Начало как можно раньше</div>
<div class="t" style="left:700.60px;width:220px;text-align:right;top:847.94px;font-size:13.3px;line-height:13.3px;color:#222;letter-spacing:0.2px;">Окончание как можно позже</div>
<div class="r" style="left:935.90px;top:846.50px;width:35.10px;height:17.70px;background:#9e9e9e;border-radius:3px;box-shadow:0 1.5px 2px rgba(0,0,0,.35);"></div>
<svg class="r" style="left:946.50px;top:849.00px;" width="14" height="12" viewBox="0 0 14 12"><path d="M1.5 1l5 5-5 5M7 1l5 5-5 5" fill="none" stroke="#fff" stroke-width="1.3"/></svg>
<div class="t" style="left:47.50px;top:878.74px;font-size:13.3px;line-height:13.3px;color:#111;font-weight:700;letter-spacing:-0.65px;">Физобъем</div>
<div class="r" style="left:201.00px;top:884.30px;width:770.40px;height:2.80px;background:#b6b6bb;"></div>
<div class="r" style="left:977.80px;top:665.20px;width:1.20px;height:242.00px;background:#c8c8cc;"></div>
<div class="t" style="left:985.90px;top:686.09px;font-size:12.3px;line-height:12.3px;color:#111;font-weight:700;letter-spacing:-0.17px;">Атрибуты</div>
<div class="r" style="left:1067.60px;top:672.30px;width:842.70px;height:35.40px;background:#fff;border:1px solid #b9b9be;border-radius:4px;"></div>
<div class="t" style="left:1078.50px;top:682.53px;font-size:12.6px;line-height:12.6px;color:#8a8a90;">Поиск</div>
<div class="t" style="left:986.30px;top:727.53px;font-size:12.6px;line-height:12.6px;color:#222;letter-spacing:0.13px;">Шифр</div>
<div class="t" style="left:1451.70px;top:727.36px;font-size:12.8px;line-height:12.8px;color:#222;">01.01</div>
<div class="r" style="left:982.60px;top:753.20px;width:931.40px;height:1.00px;background:#c6c6cb;"></div>
<div class="t" style="left:986.30px;top:765.33px;font-size:12.6px;line-height:12.6px;color:#222;letter-spacing:0.45px;">Наименование</div>
<div class="t" style="left:1451.70px;top:765.16px;font-size:12.8px;line-height:12.8px;color:#222;letter-spacing:0.49px;">Вертикальная планировка территории</div>
<div class="r" style="left:982.60px;top:791.00px;width:931.40px;height:1.00px;background:#c6c6cb;"></div>
<div class="t" style="left:986.30px;top:803.13px;font-size:12.6px;line-height:12.6px;color:#222;letter-spacing:0.3px;">Старт</div>
<div class="t" style="left:1451.70px;top:802.96px;font-size:12.8px;line-height:12.8px;color:#222;letter-spacing:0.37px;">29.04.2025 09:00</div>
<div class="r" style="left:982.60px;top:828.80px;width:931.40px;height:1.00px;background:#c6c6cb;"></div>
<div class="t" style="left:986.30px;top:840.93px;font-size:12.6px;line-height:12.6px;color:#222;letter-spacing:0.3px;">Финиш</div>
<div class="t" style="left:1451.70px;top:840.76px;font-size:12.8px;line-height:12.8px;color:#222;letter-spacing:0.37px;">01.05.2025 18:00</div>
<div class="r" style="left:982.60px;top:866.60px;width:931.40px;height:1.00px;background:#c6c6cb;"></div>
<div class="t" style="left:986.30px;top:878.73px;font-size:12.6px;line-height:12.6px;color:#222;letter-spacing:0.68px;">Прогресс</div>
<div class="t" style="left:1451.70px;top:878.56px;font-size:12.8px;line-height:12.8px;color:#222;">0</div>
<div class="r" style="left:982.60px;top:904.40px;width:931.40px;height:1.00px;background:#c6c6cb;"></div>
<svg class="r" style="left:0;top:0" width="1918" height="907"><g fill="none" stroke="#4d4d52" stroke-width="1.85" stroke-linecap="round" stroke-linejoin="round" ><path d="M8.8 26h20"/><path d="M11 26V16.2l7.8-6.6 7.8 6.6V26"/><path d="M16.6 26v-3.6a2.2 2.2 0 0 1 4.4 0V26"/></g><g fill="none" stroke="#4d4d52" stroke-width="1.9" stroke-linecap="round" stroke-linejoin="round" ><circle cx="18.6" cy="57.35" r="9.45"/><path d="M9.6 54.3h18M9.6 61h18"/><ellipse cx="18.75" cy="57.35" rx="3.8" ry="9.45"/></g><g fill="none" stroke="#fff" stroke-width="1.9" stroke-linecap="round" stroke-linejoin="round" ><path d="M9 89.6h12.3M13 97h12.2M17 104.3h12.2"/></g><g fill="none" stroke="#4d4d52" stroke-width="1.85" stroke-linecap="round" stroke-linejoin="round" ><rect x="9.2" y="127.1" width="19.2" height="18.5" rx="1.6"/><path d="M13.4 131.4v8.8M18.8 131.4v3.8M23.8 131.4v6.3"/></g><g fill="none" stroke="#4d4d52" stroke-width="1.85" stroke-linecap="round" stroke-linejoin="round" ><path d="M8.6 170.4c3.2-3 6-3.1 10-1.2s7 1.6 10.3-.4"/><path d="M9.2 185.6v-7.6h6.6v7.6zM15.8 185.6v-13.2h6.6v13.2zM22.4 185.6v-7.6h6.6v7.6z"/></g><g fill="none" stroke="#4d4d52" stroke-width="1.85" stroke-linecap="round" stroke-linejoin="round" ><rect x="13.6" y="205.8" width="15.2" height="11.2" rx="1.8"/></g><rect x="8.6" y="213.4" width="15.3" height="12.3" rx="1.8" fill="#f0f0f3" stroke="#4d4d52" stroke-width="1.85"/><g fill="none" stroke="#4d4d52" stroke-width="2.6" stroke-linecap="round" stroke-linejoin="round" stroke-linecap="butt"><path d="M14.2 206.8h14M9.4 214.5h14"/></g><g fill="none" stroke="#4d4d52" stroke-width="1.85" stroke-linecap="round" stroke-linejoin="round" ><path d="M9.8 265.3V247.4c2.2-2.4 4.8-2 9.4.6 4.2 2.3 7 2.2 9.6-.6v13c-2.6 2.6-5.4 2.7-9.6.4-4.6-2.6-7.2-2.9-9.4-.8"/></g><g fill="none" stroke="#4d4d52" stroke-width="2" stroke-linecap="round" stroke-linejoin="round" ><path d="M8.6 285h20.6M8.6 304.2h20.6M9.6 291.6l5.8 7.7M15.6 291.6l5.8 7.7M22.2 291.6l5.8 7.7"/></g><g fill="none" stroke="#4d4d52" stroke-width="1.9" stroke-linecap="round" stroke-linejoin="round" ><rect x="9.1" y="324.6" width="7.6" height="7.9"/><rect x="20.6" y="324.6" width="7.9" height="7.9"/><rect x="9.1" y="336.7" width="7.6" height="7.3"/><rect x="20.6" y="336.7" width="7.9" height="7.3"/></g><g fill="none" stroke="#4d4d52" stroke-width="1.85" stroke-linecap="round" stroke-linejoin="round" ><ellipse cx="18.85" cy="369" rx="9.8" ry="3.8"/><path d="M9.05 369v11c0 2.1 4.4 3.9 9.8 3.9s9.8-1.8 9.8-3.9v-11"/><path d="M9.05 374.5c0 2.1 4.4 3.7 9.8 3.7s9.8-1.6 9.8-3.7"/></g><g fill="none" stroke="#4d4d52" stroke-width="1.85" stroke-linecap="round" stroke-linejoin="round" ><path d="M11.2 405.3H9v18.6h2.2M26.6 405.3h2.2v18.6h-2.2"/><path d="M14 420.6l4.9-12 4.9 12M15.6 416.6h6.6"/></g><g fill="none" stroke="#4d4d52" stroke-width="1.85" stroke-linecap="round" stroke-linejoin="round" ><rect x="9.6" y="446.2" width="18.4" height="17" rx="2"/><path d="M9.6 449.5h18.4" stroke-width="2.8"/><path d="M13.4 444.3v2.5M24.3 444.3v2.5"/></g><g fill="none" stroke="#4d4d52" stroke-width="1.4" stroke-linecap="round" stroke-linejoin="round" ><path d="M14 455.3h.1M18.8 455.3h.1M23.6 455.3h.1M14 459.6h.1M18.8 459.6h.1M23.6 459.6h.1"/></g><g fill="none" stroke="#4d4d52" stroke-width="1.85" stroke-linecap="round" stroke-linejoin="round" ><path d="M9 493.4c2.8-4.4 6-6.5 9.6-6.5s6.8 2.1 9.6 6.5c-2.8 4.4-6 6.5-9.6 6.5s-6.8-2.1-9.6-6.5z"/><circle cx="18.6" cy="493.4" r="2.6"/></g><g fill="none" stroke="#4d4d52" stroke-width="1.7" stroke-linecap="round" stroke-linejoin="round" ><circle cx="18.7" cy="730.7" r="3.7"/><path d="M18.7 720.9v2M18.7 738.5v2M8.9 730.7h2M26.5 730.7h2M11.8 723.8l1.4 1.4M24.2 736.2l1.4 1.4M11.8 737.6l1.4-1.4M24.2 725.2l1.4-1.4"/></g><g fill="none" stroke="#4d4d52" stroke-width="1.8" stroke-linecap="round" stroke-linejoin="round" ><path d="M9.2 779.4V764a2 2 0 0 1 2-2h16.4a2 2 0 0 1 2 2v10.3a2 2 0 0 1-2 2H13.3z"/><path d="M13.6 766.9h11.5M13.6 770.4h11.5M13.6 773.8h7.6"/></g><g fill="none" stroke="#4d4d52" stroke-width="1.8" stroke-linecap="round" stroke-linejoin="round" ><path d="M10 815.6c1.8-1.6 2.4-3.6 2.4-7.4a6.4 6.4 0 0 1 12.8 0c0 3.8.6 5.8 2.4 7.4z"/><path d="M16 815.8a2.8 2.8 0 0 0 5.6 0"/></g><g fill="none" stroke="#4d4d52" stroke-width="1.8" stroke-linecap="round" stroke-linejoin="round" ><path d="M8.6 842.9h15M15.9 840.4v2.5M12.6 846.4l6 6.6M20.6 843.8c-1.6 4.6-5 8.6-9.9 11.3"/><path d="M20.1 859l3.9-10.6 4.4 10.6M21.3 855.8h5.9"/></g><g fill="none" stroke="#4d4d52" stroke-width="1.8" stroke-linecap="round" stroke-linejoin="round" ><circle cx="18.7" cy="888.9" r="9.6"/><path d="M18.7 886.7v6.4M18.7 883.6v.2"/></g><g fill="none" stroke="#4d4d52" stroke-width="1.85" stroke-linecap="round" stroke-linejoin="round" ><path d="M49.2 27.2v-4.8L63.6 8a2 2 0 0 1 2.8 0l2.6 2.6a2 2 0 0 1 0 2.8L54.6 27.2z"/><path d="M60 12.4l5.2 5"/></g><g fill="none" stroke="#4d4d52" stroke-width="1.9" stroke-linecap="round" stroke-linejoin="round" ><circle cx="104.45" cy="17.4" r="9.5"/><path d="M104.7 12.8v5.3l3.7 3.3"/></g><g fill="none" stroke="#4d4d52" stroke-width="1.9" stroke-linecap="round" stroke-linejoin="round" ><path d="M1727.6 7.7h20.6M1727.6 27.3h20.6"/><path d="M1733 13.6v8.4M1729.9 18.9l3.1 3.2 3.1-3.2M1742 22.2v-8.2M1738.9 17.3l3.1-3.2 3.1 3.2"/></g><g fill="none" stroke="#4d4d52" stroke-width="1.9" stroke-linecap="round" stroke-linejoin="round" ><path d="M1788.2 17.4a9.5 9.5 0 1 1-2.6-6.6"/><path d="M1788.4 8.9v5.6h-5.4"/></g><g fill="none" stroke="#4d4d52" stroke-width="1.9" stroke-linecap="round" stroke-linejoin="round" ><rect x="1808.9" y="8.2" width="19.4" height="18.6" rx="1.6"/><path d="M1814.8 8.2v18.6"/></g><g fill="none" stroke="#4d4d52" stroke-width="1.9" stroke-linecap="round" stroke-linejoin="round" ><rect x="1849.2" y="8.2" width="18.8" height="18.6" rx="1.6"/><path d="M1863 8.2v18.6"/></g><g fill="none" stroke="#4d4d52" stroke-width="1.9" stroke-linecap="round" stroke-linejoin="round" ><rect x="1888.2" y="8.2" width="18.9" height="18.6" rx="1.6"/><path d="M1888.2 21h18.9"/></g><path d="M55.3 55h9l-4.5 4.8z" fill="#4d4d52"/><g fill="none" stroke="#4d4d52" stroke-width="1.8" stroke-linecap="round" stroke-linejoin="round" ><circle cx="529.35" cy="55.3" r="7.55"/><path d="M534.8 60.8l6.6 6.2"/></g><g fill="none" stroke="#4d4d52" stroke-width="1.8" stroke-linecap="round" stroke-linejoin="round" ><path d="M561.9 57.6c2.6-4.3 5.9-6.2 9.7-6.2s7.1 1.9 9.7 6.2c-2.6 4.3-5.9 6.2-9.7 6.2s-7.1-1.9-9.7-6.2z"/><circle cx="571.6" cy="57.6" r="2.3"/></g><g fill="none" stroke="#4d4d52" stroke-width="1.8" stroke-linecap="round" stroke-linejoin="round" ><rect x="601.9" y="48.2" width="19" height="18.6" rx="1.2"/><path d="M606.3 66.8V54.2a1 1 0 0 1 1-1h13.6M613 66.8v-6.4a1 1 0 0 1 1-1h6.9"/></g><g fill="none" stroke="#4d4d52" stroke-width="2.4" stroke-linecap="round" stroke-linejoin="round" stroke-linecap="butt"><path d="M602 49.2h18.9M607 54.3h13.9M613.4 60.5h7.5"/></g><g fill="none" stroke="#4d4d52" stroke-width="1.9" stroke-linecap="round" stroke-linejoin="round" ><path d="M651 50.9h-8.3a.8.8 0 0 0-.8.8v14.8a.8.8 0 0 0 .8.8h16.3a.8.8 0 0 0 .8-.8V55.6"/><path d="M645.7 58.9l3.8 3.2 6.2-5.8"/></g><g fill="none" stroke="#4d4d52" stroke-width="1.4" stroke-linecap="round" stroke-linejoin="round" ><path d="M654.1 49.9l2.5 2 4.6-4.3"/></g><g fill="none" stroke="#4d4d52" stroke-width="1.9" stroke-linecap="round" stroke-linejoin="round" ><path d="M691 50.9h-8.3a.8.8 0 0 0-.8.8v14.8a.8.8 0 0 0 .8.8h16.3a.8.8 0 0 0 .8-.8V55.6"/><path d="M685.7 58.9l3.8 3.2 6.2-5.8"/></g><g fill="none" stroke="#4d4d52" stroke-width="1.4" stroke-linecap="round" stroke-linejoin="round" ><path d="M696.1 47.8l5 4.4M701.1 47.8l-5 4.4"/></g><g fill="none" stroke="#4d4d52" stroke-width="1.9" stroke-linecap="round" stroke-linejoin="round" ><path d="M721.9 50.2a.9.9 0 0 1 .9-1h14.6a.9.9 0 0 1 .9 1v1.6l-6.2 6.1v6.8a.6.6 0 0 1-.6.6h-3.6a.6.6 0 0 1-.6-.6v-6.8l-5.4-6.1z"/></g><path d="M736.4 65.8h5.4l-2.7 2z" fill="#4d4d52"/><g fill="none" stroke="#4d4d52" stroke-width="1.8" stroke-linecap="round" stroke-linejoin="round" ><path d="M826.2 58.6l9.6 8.9M835.8 58.6l-9.6 8.9"/></g><g fill="none" stroke="#4d4d52" stroke-width="1.4" stroke-linecap="round" stroke-linejoin="round" ><path d="M837.8 48.4h8.6l-3.2 3.6v4.2h-2.2V52z"/></g><path d="M996.3 54h10.2l-5.1 5.4z" fill="#4d4d52"/><g fill="none" stroke="#4d4d52" stroke-width="1.8" stroke-linecap="round" stroke-linejoin="round" ><path d="M1808.9 49.8h20.2M1808.9 56.6h20.2M1808.9 63.6h20.2"/></g><circle cx="1815.9" cy="49.8" r="1.9" fill="#f0f0f3" stroke="#4d4d52" stroke-width="1.6"/><circle cx="1822.7" cy="56.6" r="1.9" fill="#f0f0f3" stroke="#4d4d52" stroke-width="1.6"/><circle cx="1814.5" cy="63.6" r="1.9" fill="#f0f0f3" stroke="#4d4d52" stroke-width="1.6"/><g fill="none" stroke="#4d4d52" stroke-width="1.8" stroke-linecap="round" stroke-linejoin="round" ><path d="M1857.4 46v2.9l7.4 3.9-14.2 5.7 6.8 3.5v3.7"/></g><path d="M1863.6 65.3h5.7l-2.85 2z" fill="#4d4d52"/><g fill="none" stroke="#4d4d52" stroke-width="1.8" stroke-linecap="round" stroke-linejoin="round" ><path d="M1890.8 48.3h10.8"/><rect x="1888.2" y="51.7" width="16.3" height="7.3" rx="2.6"/></g><rect x="1890.8" y="55.2" width="11" height="5.6" rx=".8" fill="#f0f0f3" stroke="#4d4d52" stroke-width="1.8"/><path d="M1903.4 65.3h5.1l-2.55 2z" fill="#4d4d52"/><g fill="none" stroke="#555" stroke-width="1.35" stroke-linecap="round" stroke-linejoin="round" ><path d="M843.2 712.8l5.6 5.6"/><path d="M841.3 711.6l2.6-.9-.9 2.6z"/><path d="M846.4 716.2c1.6-1.6 4.4-1.6 6 0s1.9 4.6.3 6.2-4.6 1.3-6.2-.3-1.7-4.3-.1-5.9z"/></g><g fill="none" stroke="#b3b3b8" stroke-width="1.05" stroke-linecap="round" stroke-linejoin="round" ><path d="M811.70 734.00 L811.40 734.67 L810.68 735.21 L809.92 735.62 L809.50 736.03 L809.51 736.62 L809.76 737.44 L809.88 738.34 L809.62 739.02 L808.94 739.28 L808.04 739.16 L807.22 738.91 L806.63 738.90 L806.22 739.32 L805.81 740.08 L805.27 740.80 L804.60 741.10 L803.93 740.80 L803.39 740.08 L802.98 739.32 L802.57 738.90 L801.98 738.91 L801.16 739.16 L800.26 739.28 L799.58 739.02 L799.32 738.34 L799.44 737.44 L799.69 736.62 L799.70 736.03 L799.28 735.62 L798.52 735.21 L797.80 734.67 L797.50 734.00 L797.80 733.33 L798.52 732.79 L799.28 732.38 L799.70 731.97 L799.69 731.38 L799.44 730.56 L799.32 729.66 L799.58 728.98 L800.26 728.72 L801.16 728.84 L801.98 729.09 L802.57 729.10 L802.98 728.68 L803.39 727.92 L803.93 727.20 L804.60 726.90 L805.27 727.20 L805.81 727.92 L806.22 728.68 L806.63 729.10 L807.22 729.09 L808.04 728.84 L808.94 728.72 L809.62 728.98 L809.88 729.66 L809.76 730.56 L809.51 731.38 L809.50 731.97 L809.92 732.38 L810.68 732.79 L811.40 733.33 L811.70 734.00Z"/><path d="M801.2 731.2l2.6 2.8-2.6 2.8M804.6 731.2l2.6 2.8-2.6 2.8"/></g></svg>
<div class="r" style="left:40px;top:77.5px;width:267px;height:432.5px;background:#f3f3f5;box-shadow:2px 3px 4px rgba(0,0,0,.22);border-radius:0 0 3px 3px;"></div>
<div class="r" style="left:40.00px;top:164.00px;width:267.00px;height:1.20px;background:#c6c6cb;"></div>
<div class="r" style="left:40.00px;top:250.80px;width:267.00px;height:1.20px;background:#c6c6cb;"></div>
<div class="t" style="left:54.2px;top:90.30px;height:16px;"><span style="display:inline-block;font-size:13.3px;line-height:16px;vertical-align:top;color:#222;">Перейти в начало графика</span><span style="display:inline-block;box-sizing:border-box;width:26.2px;height:16px;line-height:14px;margin-left:4.3px;background:#ebebee;border:1px solid #c2c2c7;border-radius:3px;box-shadow:0 1px 1px rgba(0,0,0,.18);font-family:'Liberation Mono', monospace;font-size:10.5px;color:#2a2a2a;text-align:center;vertical-align:top;position:relative;top:2px;">Alt</span><span style="display:inline-block;width:8.4px;text-align:center;font-size:13px;line-height:16px;vertical-align:top;color:#222;">+</span><span style="display:inline-block;box-sizing:border-box;width:32.5px;height:16px;line-height:14px;background:#ebebee;border:1px solid #c2c2c7;border-radius:3px;box-shadow:0 1px 1px rgba(0,0,0,.18);font-family:'Liberation Mono', monospace;font-size:10.5px;color:#2a2a2a;text-align:center;vertical-align:top;position:relative;top:2px;">Home</span></div>
<div class="t" style="left:54.2px;top:133.30px;height:16px;"><span style="display:inline-block;font-size:13.3px;line-height:16px;vertical-align:top;color:#222;">Перейти в конец графика</span><span style="display:inline-block;box-sizing:border-box;width:26.2px;height:16px;line-height:14px;margin-left:4.3px;background:#ebebee;border:1px solid #c2c2c7;border-radius:3px;box-shadow:0 1px 1px rgba(0,0,0,.18);font-family:'Liberation Mono', monospace;font-size:10.5px;color:#2a2a2a;text-align:center;vertical-align:top;position:relative;top:2px;">Alt</span><span style="display:inline-block;width:8.4px;text-align:center;font-size:13px;line-height:16px;vertical-align:top;color:#222;">+</span><span style="display:inline-block;box-sizing:border-box;width:26.1px;height:16px;line-height:14px;background:#ebebee;border:1px solid #c2c2c7;border-radius:3px;box-shadow:0 1px 1px rgba(0,0,0,.18);font-family:'Liberation Mono', monospace;font-size:10.5px;color:#2a2a2a;text-align:center;vertical-align:top;position:relative;top:2px;">End</span></div>
<div class="t" style="left:54.2px;top:176.80px;height:16px;"><span style="display:inline-block;font-size:13.3px;line-height:16px;vertical-align:top;color:#222;">Свернуть всё</span><span style="display:inline-block;box-sizing:border-box;width:26.2px;height:16px;line-height:14px;margin-left:4.3px;background:#ebebee;border:1px solid #c2c2c7;border-radius:3px;box-shadow:0 1px 1px rgba(0,0,0,.18);font-family:'Liberation Mono', monospace;font-size:10.5px;color:#2a2a2a;text-align:center;vertical-align:top;position:relative;top:2px;">Alt</span><span style="display:inline-block;width:8.4px;text-align:center;font-size:13px;line-height:16px;vertical-align:top;color:#222;">+</span><span style="display:inline-block;box-sizing:border-box;width:14.5px;height:16px;line-height:14px;background:#ebebee;border:1px solid #c2c2c7;border-radius:3px;box-shadow:0 1px 1px rgba(0,0,0,.18);font-family:'Liberation Mono', monospace;font-size:10.5px;color:#2a2a2a;text-align:center;vertical-align:top;position:relative;top:2px;">[</span></div>
<div class="t" style="left:54.2px;top:219.80px;height:16px;"><span style="display:inline-block;font-size:13.3px;line-height:16px;vertical-align:top;color:#222;">Развернуть всё</span><span style="display:inline-block;box-sizing:border-box;width:26.2px;height:16px;line-height:14px;margin-left:4.3px;background:#ebebee;border:1px solid #c2c2c7;border-radius:3px;box-shadow:0 1px 1px rgba(0,0,0,.18);font-family:'Liberation Mono', monospace;font-size:10.5px;color:#2a2a2a;text-align:center;vertical-align:top;position:relative;top:2px;">Alt</span><span style="display:inline-block;width:8.4px;text-align:center;font-size:13px;line-height:16px;vertical-align:top;color:#222;">+</span><span style="display:inline-block;box-sizing:border-box;width:14.5px;height:16px;line-height:14px;background:#ebebee;border:1px solid #c2c2c7;border-radius:3px;box-shadow:0 1px 1px rgba(0,0,0,.18);font-family:'Liberation Mono', monospace;font-size:10.5px;color:#2a2a2a;text-align:center;vertical-align:top;position:relative;top:2px;">]</span></div>
<div class="t" style="left:54.2px;top:264.80px;height:16px;"><span style="display:inline-block;font-size:13.3px;line-height:16px;vertical-align:top;color:#222;">Свернуть до 1 уровня</span><span style="display:inline-block;box-sizing:border-box;width:26.2px;height:16px;line-height:14px;margin-left:4.3px;background:#ebebee;border:1px solid #c2c2c7;border-radius:3px;box-shadow:0 1px 1px rgba(0,0,0,.18);font-family:'Liberation Mono', monospace;font-size:10.5px;color:#2a2a2a;text-align:center;vertical-align:top;position:relative;top:2px;">Alt</span><span style="display:inline-block;width:8.4px;text-align:center;font-size:13px;line-height:16px;vertical-align:top;color:#222;">+</span><span style="display:inline-block;box-sizing:border-box;width:14.5px;height:16px;line-height:14px;background:#ebebee;border:1px solid #c2c2c7;border-radius:3px;box-shadow:0 1px 1px rgba(0,0,0,.18);font-family:'Liberation Mono', monospace;font-size:10.5px;color:#2a2a2a;text-align:center;vertical-align:top;position:relative;top:2px;">1</span></div>
<div class="t" style="left:54.2px;top:307.80px;height:16px;"><span style="display:inline-block;font-size:13.3px;line-height:16px;vertical-align:top;color:#222;">Свернуть до 2 уровня</span><span style="display:inline-block;box-sizing:border-box;width:26.2px;height:16px;line-height:14px;margin-left:4.3px;background:#ebebee;border:1px solid #c2c2c7;border-radius:3px;box-shadow:0 1px 1px rgba(0,0,0,.18);font-family:'Liberation Mono', monospace;font-size:10.5px;color:#2a2a2a;text-align:center;vertical-align:top;position:relative;top:2px;">Alt</span><span style="display:inline-block;width:8.4px;text-align:center;font-size:13px;line-height:16px;vertical-align:top;color:#222;">+</span><span style="display:inline-block;box-sizing:border-box;width:14.5px;height:16px;line-height:14px;background:#ebebee;border:1px solid #c2c2c7;border-radius:3px;box-shadow:0 1px 1px rgba(0,0,0,.18);font-family:'Liberation Mono', monospace;font-size:10.5px;color:#2a2a2a;text-align:center;vertical-align:top;position:relative;top:2px;">2</span></div>
<div class="t" style="left:54.2px;top:350.80px;height:16px;"><span style="display:inline-block;font-size:13.3px;line-height:16px;vertical-align:top;color:#222;">Свернуть до 3 уровня</span><span style="display:inline-block;box-sizing:border-box;width:26.2px;height:16px;line-height:14px;margin-left:4.3px;background:#ebebee;border:1px solid #c2c2c7;border-radius:3px;box-shadow:0 1px 1px rgba(0,0,0,.18);font-family:'Liberation Mono', monospace;font-size:10.5px;color:#2a2a2a;text-align:center;vertical-align:top;position:relative;top:2px;">Alt</span><span style="display:inline-block;width:8.4px;text-align:center;font-size:13px;line-height:16px;vertical-align:top;color:#222;">+</span><span style="display:inline-block;box-sizing:border-box;width:14.5px;height:16px;line-height:14px;background:#ebebee;border:1px solid #c2c2c7;border-radius:3px;box-shadow:0 1px 1px rgba(0,0,0,.18);font-family:'Liberation Mono', monospace;font-size:10.5px;color:#2a2a2a;text-align:center;vertical-align:top;position:relative;top:2px;">3</span></div>
<div class="t" style="left:54.2px;top:393.80px;height:16px;"><span style="display:inline-block;font-size:13.3px;line-height:16px;vertical-align:top;color:#222;">Свернуть до 4 уровня</span><span style="display:inline-block;box-sizing:border-box;width:26.2px;height:16px;line-height:14px;margin-left:4.3px;background:#ebebee;border:1px solid #c2c2c7;border-radius:3px;box-shadow:0 1px 1px rgba(0,0,0,.18);font-family:'Liberation Mono', monospace;font-size:10.5px;color:#2a2a2a;text-align:center;vertical-align:top;position:relative;top:2px;">Alt</span><span style="display:inline-block;width:8.4px;text-align:center;font-size:13px;line-height:16px;vertical-align:top;color:#222;">+</span><span style="display:inline-block;box-sizing:border-box;width:14.5px;height:16px;line-height:14px;background:#ebebee;border:1px solid #c2c2c7;border-radius:3px;box-shadow:0 1px 1px rgba(0,0,0,.18);font-family:'Liberation Mono', monospace;font-size:10.5px;color:#2a2a2a;text-align:center;vertical-align:top;position:relative;top:2px;">4</span></div>
<div class="t" style="left:54.2px;top:436.80px;height:16px;"><span style="display:inline-block;font-size:13.3px;line-height:16px;vertical-align:top;color:#222;">Свернуть до 5 уровня</span><span style="display:inline-block;box-sizing:border-box;width:26.2px;height:16px;line-height:14px;margin-left:4.3px;background:#ebebee;border:1px solid #c2c2c7;border-radius:3px;box-shadow:0 1px 1px rgba(0,0,0,.18);font-family:'Liberation Mono', monospace;font-size:10.5px;color:#2a2a2a;text-align:center;vertical-align:top;position:relative;top:2px;">Alt</span><span style="display:inline-block;width:8.4px;text-align:center;font-size:13px;line-height:16px;vertical-align:top;color:#222;">+</span><span style="display:inline-block;box-sizing:border-box;width:14.5px;height:16px;line-height:14px;background:#ebebee;border:1px solid #c2c2c7;border-radius:3px;box-shadow:0 1px 1px rgba(0,0,0,.18);font-family:'Liberation Mono', monospace;font-size:10.5px;color:#2a2a2a;text-align:center;vertical-align:top;position:relative;top:2px;">5</span></div>
<div class="t" style="left:54.2px;top:480.30px;height:16px;"><span style="display:inline-block;font-size:13.3px;line-height:16px;vertical-align:top;color:#222;">Свернуть до 6 уровня</span><span style="display:inline-block;box-sizing:border-box;width:26.2px;height:16px;line-height:14px;margin-left:4.3px;background:#ebebee;border:1px solid #c2c2c7;border-radius:3px;box-shadow:0 1px 1px rgba(0,0,0,.18);font-family:'Liberation Mono', monospace;font-size:10.5px;color:#2a2a2a;text-align:center;vertical-align:top;position:relative;top:2px;">Alt</span><span style="display:inline-block;width:8.4px;text-align:center;font-size:13px;line-height:16px;vertical-align:top;color:#222;">+</span><span style="display:inline-block;box-sizing:border-box;width:14.5px;height:16px;line-height:14px;background:#ebebee;border:1px solid #c2c2c7;border-radius:3px;box-shadow:0 1px 1px rgba(0,0,0,.18);font-family:'Liberation Mono', monospace;font-size:10.5px;color:#2a2a2a;text-align:center;vertical-align:top;position:relative;top:2px;">6</span></div>
<svg class="r" style="left:0;top:0" width="1918" height="907"><path d="M365 100.5H305" stroke="#000" stroke-width="3.2"/><path d="M295 100.5L306.5 94.7V106.3Z" fill="#000"/><ellipse cx="378.4" cy="100.3" rx="15.3" ry="17.6" fill="#fff" stroke="#000" stroke-width="3"/><text x="378.4" y="107.7" text-anchor="middle" font-family="Liberation Sans" font-size="21" fill="#000">1</text><path d="M365 140.6H305" stroke="#000" stroke-width="3.2"/><path d="M295 140.6L306.5 134.79999999999998V146.4Z" fill="#000"/><ellipse cx="378.4" cy="141" rx="15.3" ry="17.6" fill="#fff" stroke="#000" stroke-width="3"/><text x="378.4" y="148.4" text-anchor="middle" font-family="Liberation Sans" font-size="21" fill="#000">2</text><path d="M290 183.5H229.3" stroke="#000" stroke-width="3.2"/><path d="M219.3 183.5L230.8 177.7V189.3Z" fill="#000"/><ellipse cx="301.8" cy="183.5" rx="15.3" ry="17.6" fill="#fff" stroke="#000" stroke-width="3"/><text x="301.8" y="190.9" text-anchor="middle" font-family="Liberation Sans" font-size="21" fill="#000">3</text><path d="M290 223.6H227.7" stroke="#000" stroke-width="3.2"/><path d="M217.7 223.6L229.2 217.79999999999998V229.4Z" fill="#000"/><ellipse cx="301.4" cy="224" rx="15.3" ry="17.6" fill="#fff" stroke="#000" stroke-width="3"/><text x="301.4" y="231.4" text-anchor="middle" font-family="Liberation Sans" font-size="21" fill="#000">4</text><path d="M322 275H264.5" stroke="#000" stroke-width="3.2"/><path d="M254.5 275L266.0 269.2V280.8Z" fill="#000"/><ellipse cx="335.2" cy="274.5" rx="15.3" ry="17.6" fill="#fff" stroke="#000" stroke-width="3"/><text x="335.2" y="281.9" text-anchor="middle" font-family="Liberation Sans" font-size="21" fill="#000">5</text><path d="M649.8 146V85.8" stroke="#000" stroke-width="3.2"/><path d="M649.8 75.8L644.0 87.5H655.5999999999999Z" fill="#000"/><ellipse cx="650.5" cy="161" rx="15.3" ry="17.6" fill="#fff" stroke="#000" stroke-width="3"/><text x="650.5" y="168.4" text-anchor="middle" font-family="Liberation Sans" font-size="21" fill="#000">6</text><path d="M690.4 146V88.8" stroke="#000" stroke-width="3.2"/><path d="M690.4 78.8L684.6 90.5H696.1999999999999Z" fill="#000"/><ellipse cx="692.6" cy="162.5" rx="15.3" ry="17.6" fill="#fff" stroke="#000" stroke-width="3"/><text x="692.6" y="169.9" text-anchor="middle" font-family="Liberation Sans" font-size="21" fill="#000">7</text></svg>
</body></html>
